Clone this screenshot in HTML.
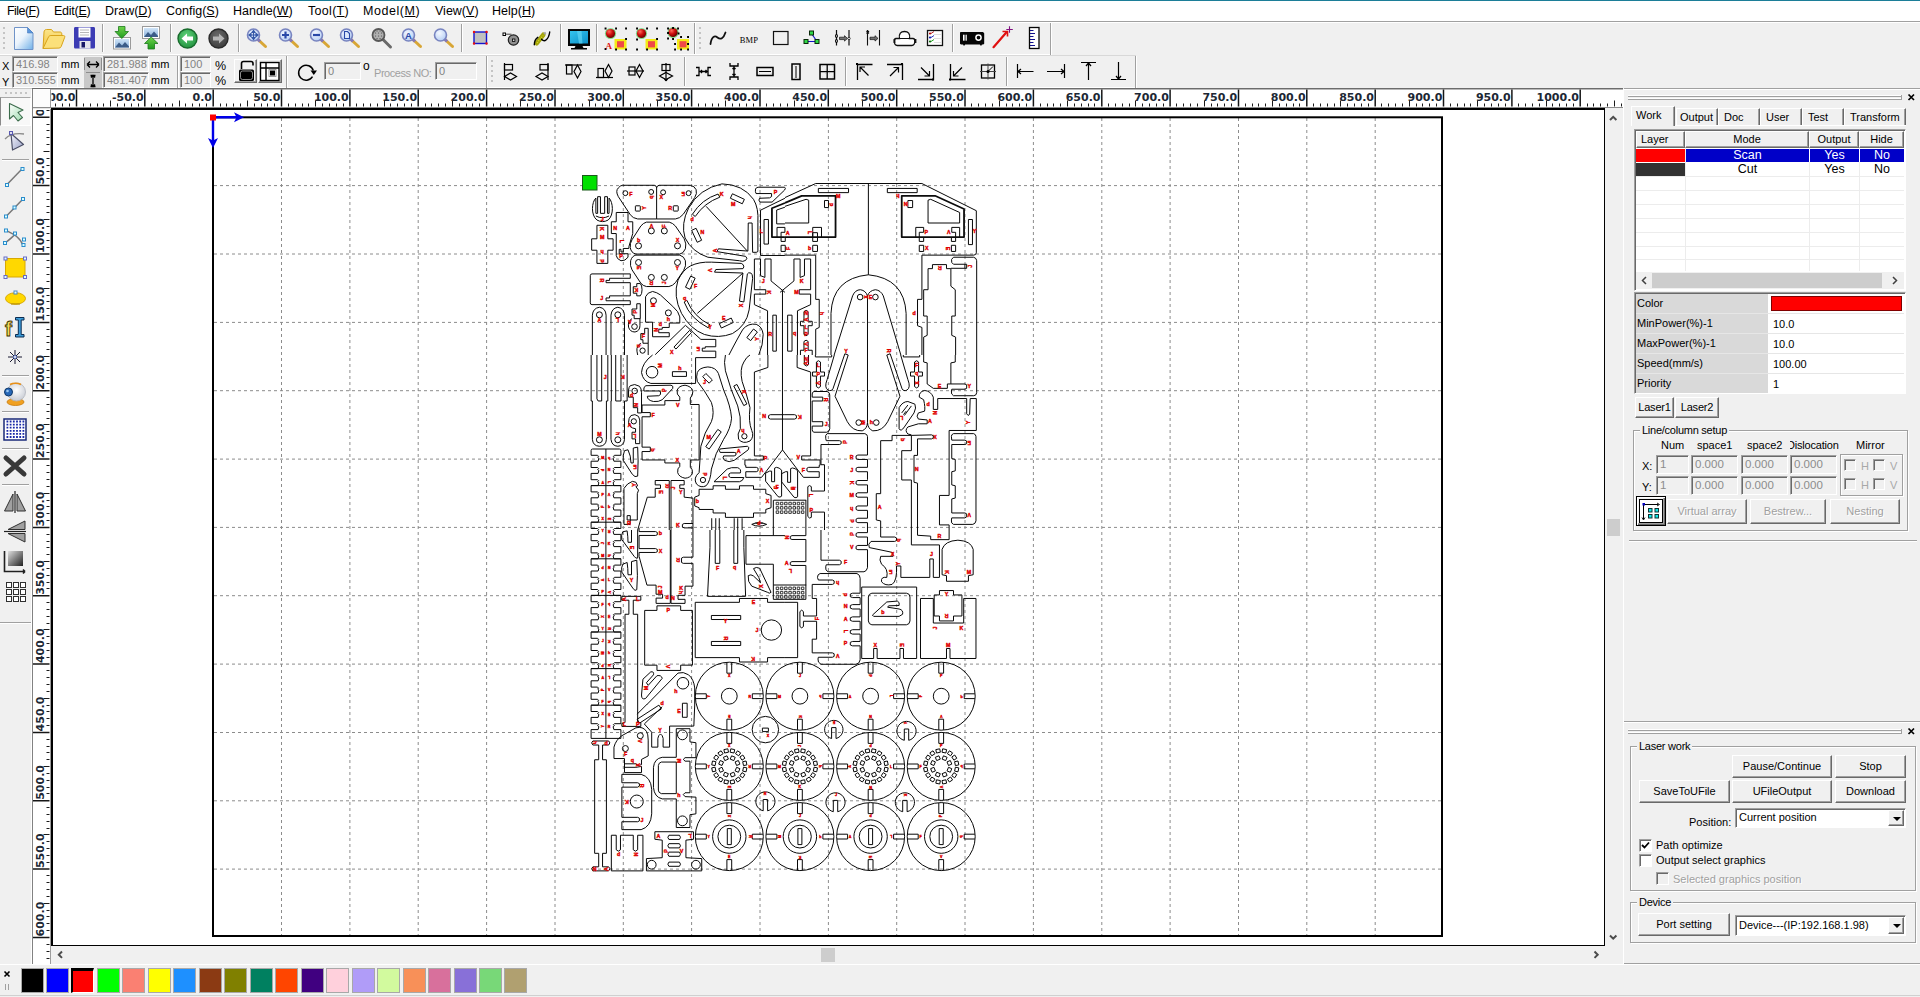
<!DOCTYPE html>
<html lang="en">
<head>
<meta charset="utf-8">
<title>RDWorks</title>
<style>
html,body{margin:0;padding:0;}
body{width:1920px;height:997px;position:relative;overflow:hidden;background:#f0f0f0;
 font-family:"Liberation Sans",sans-serif;font-size:11px;color:#000;}
.a{position:absolute;}
.t{position:absolute;white-space:nowrap;line-height:14px;font-size:11px;letter-spacing:0;}
svg{position:absolute;overflow:visible;}
#menubar{left:0;top:1px;width:1920px;height:20px;background:#fff;}
#menubar span{position:absolute;top:3px;font-size:12.5px;line-height:15px;white-space:nowrap;color:#000;}
#menubar u{text-decoration:underline;text-underline-offset:1px;}
.vsep{position:absolute;width:1px;background:#a0a0a0;border-right:1px solid #fff;}
.hsep{position:absolute;height:1px;background:#a0a0a0;border-bottom:1px solid #fff;}
.grip{position:absolute;width:2px;}
.fld{position:absolute;box-sizing:border-box;border:1px solid;border-color:#a0a0a0 #fff #fff #a0a0a0;
 background:#f0f0f0;color:#838383;font-size:11px;line-height:14px;padding-left:3px;white-space:nowrap;overflow:hidden;
 box-shadow:inset 1px 1px 0 #696969;}
.btn{position:absolute;box-sizing:border-box;border:1px solid;border-color:#fff #696969 #696969 #fff;
 background:#f0f0f0;box-shadow:inset -1px -1px 0 #a0a0a0;text-align:center;font-size:11px;line-height:20px;white-space:nowrap;}
.grp{position:absolute;box-sizing:border-box;border:1px solid #a0a0a0;box-shadow:1px 1px 0 #fff, inset 1px 1px 0 #fff;}
.grp>b{position:absolute;top:-8px;left:6px;background:#f0f0f0;padding:0 2px;font-weight:normal;font-size:11px;letter-spacing:-.25px;line-height:14px;white-space:nowrap;}
.cb{position:absolute;box-sizing:border-box;width:13px;height:13px;border:1px solid;border-color:#a0a0a0 #fff #fff #a0a0a0;
 background:#fff;box-shadow:inset 1px 1px 0 #696969;}
.combo{position:absolute;box-sizing:border-box;border:1px solid;border-color:#a0a0a0 #fff #fff #a0a0a0;background:#fff;
 box-shadow:inset 1px 1px 0 #696969;font-size:11px;line-height:16px;padding-left:3px;white-space:nowrap;}
.combo i{position:absolute;right:1px;top:1px;bottom:1px;width:16px;box-sizing:border-box;border:1px solid;border-color:#fff #696969 #696969 #fff;background:#f0f0f0;box-shadow:inset -1px -1px 0 #a0a0a0;}
.combo i:after{content:"";position:absolute;left:4px;top:6px;border:4px solid transparent;border-top:4px solid #000;border-bottom:none;}
</style>
</head>
<body>
<div class="a" style="left:0;top:0;width:1920px;height:1px;background:#1c7e98"></div>
<div id="menubar" class="a">
<span style="left:7px;letter-spacing:-.55px">File(<u>F</u>)</span>
<span style="left:54px;letter-spacing:-.25px">Edit(<u>E</u>)</span>
<span style="left:105px">Draw(<u>D</u>)</span>
<span style="left:166px">Config(<u>S</u>)</span>
<span style="left:233px">Handle(<u>W</u>)</span>
<span style="left:308px;letter-spacing:.3px">Tool(<u>T</u>)</span>
<span style="left:363px;letter-spacing:.55px">Model(<u>M</u>)</span>
<span style="left:435px">View(<u>V</u>)</span>
<span style="left:492px">Help(<u>H</u>)</span>
</div>
<div class="a" style="left:0;top:21px;width:1920px;height:1px;background:#a0a0a0"></div>
<div class="a" style="left:0;top:22px;width:1920px;height:1px;background:#fff"></div>
<div class="a" style="left:0;top:54px;width:1051px;height:1px;background:#fff"></div>
<div class="a" style="left:0;top:55px;width:1136px;height:1px;background:#d8d8d8"></div>
<div class="a" style="left:3px;top:27px;width:2px;height:2px;background:#c4c4c4"></div>
<div class="a" style="left:3px;top:32px;width:2px;height:2px;background:#c4c4c4"></div>
<div class="a" style="left:3px;top:37px;width:2px;height:2px;background:#c4c4c4"></div>
<div class="a" style="left:3px;top:42px;width:2px;height:2px;background:#c4c4c4"></div>
<div class="a" style="left:3px;top:47px;width:2px;height:2px;background:#c4c4c4"></div>
<svg style="left:0;top:22px" width="1060" height="34" viewBox="0 22 1060 34">
<defs>
<linearGradient id="gdoc" x1="0" y1="0" x2="1" y2="1"><stop offset="0" stop-color="#fff"/><stop offset=".45" stop-color="#eaf3fc"/><stop offset="1" stop-color="#6fb0e8"/></linearGradient>
<linearGradient id="gfold" x1="0" y1="0" x2="0" y2="1"><stop offset="0" stop-color="#fbe58a"/><stop offset="1" stop-color="#f3c544"/></linearGradient>
<radialGradient id="ggrn" cx=".45" cy=".35" r=".7"><stop offset="0" stop-color="#5fd27a"/><stop offset="1" stop-color="#1f8f3c"/></radialGradient>
<radialGradient id="ggry" cx=".45" cy=".35" r=".7"><stop offset="0" stop-color="#6a6a6a"/><stop offset="1" stop-color="#3a3a3a"/></radialGradient>
<radialGradient id="glens" cx=".4" cy=".35" r=".7"><stop offset="0" stop-color="#f4f8ff"/><stop offset="1" stop-color="#b4cdf4"/></radialGradient>
<radialGradient id="gball" cx=".35" cy=".3" r=".7"><stop offset="0" stop-color="#ff6a5a"/><stop offset=".5" stop-color="#d01010"/><stop offset="1" stop-color="#700000"/></radialGradient>
<linearGradient id="gpic" x1="0" y1="0" x2="0" y2="1"><stop offset="0" stop-color="#cfe4f8"/><stop offset="1" stop-color="#8fb4dc"/></linearGradient>
<linearGradient id="garr" x1="0" y1="0" x2="0" y2="1"><stop offset="0" stop-color="#6fd44a"/><stop offset="1" stop-color="#1f9a1f"/></linearGradient>
<linearGradient id="gscr" x1="0" y1="0" x2="1" y2="1"><stop offset="0" stop-color="#35c4ee"/><stop offset="1" stop-color="#0c90c8"/></linearGradient>
<g id="mag"><line x1="4.5" y1="4.5" x2="12" y2="11.5" stroke="#d8a636" stroke-width="3" stroke-linecap="round"/><line x1="4" y1="4" x2="6.5" y2="6.5" stroke="#8478b8" stroke-width="3"/><circle cx="0" cy="0" r="6" fill="url(#glens)" stroke="#7884c0" stroke-width="1.6"/></g>
</defs>
<path d="M14.5 27.5h13l5.5 5.5v16.5h-18.5z" fill="url(#gdoc)" stroke="#6f93c8" stroke-width="1"/><path d="M27.5 27.5v5.5h5.5z" fill="#5b96dc" stroke="#4a7cc0" stroke-width=".6"/>
<path d="M43 48.5l1-16.5c.2-1.5 1-2.5 2.5-2.5l5 0 2 2.500h6.500c1.200 0 1.800.8 1.800 2v3" fill="url(#gfold)" stroke="#d8a41c" stroke-width="1"/><path d="M43 48.500l5.500-11.500c.5-1 1.200-1.500 2.500-1.500h12.500c1.200 0 1.500.800 1.200 1.800l-3.500 9.200c-.4 1-1 1.500-2.200 1.600z" fill="#fbe07a" stroke="#d8a41c" stroke-width="1"/>
<path d="M74 28.500c0-1 .6-1.500 1.500-1.500h18c.900 0 1.500.5 1.500 1.500v18.500c0 1-.600 1.500-1.500 1.500h-18c-.9 0-1.500-.5-1.500-1.500z" fill="#3c3cb4"/><rect x="78.500" y="27.500" width="12" height="10" fill="#fff"/><path d="M80 30h9M80 32.500h9M80 35h9" stroke="#b8b8b8" stroke-width="1"/><rect x="79.500" y="41" width="11" height="7.500" fill="#e4e4ec"/><rect x="81.500" y="42" width="3.500" height="5.500" fill="#181868"/>
<rect x="113.500" y="37.500" width="17" height="11.500" fill="#fff" stroke="#9a9a9a"/><rect x="115" y="39" width="14" height="8.500" fill="url(#gpic)"/><path d="M115 47.500l4-5 3 3 3-3.500 4 4.500v1z" fill="#3c5c88"/><path d="M118.500 26.500h6.500v5h3.500l-6.700 7-6.800-7h3.500z" fill="url(#garr)" stroke="#1c7a1c" stroke-width=".8"/>
<rect x="142.500" y="26.500" width="17" height="12" fill="#fff" stroke="#9a9a9a"/><rect x="144" y="28" width="14" height="9" fill="url(#gpic)"/><path d="M144 37l4-5 3 3 3-3.500 4 4.500v1z" fill="#3c5c88"/><path d="M148 49v-5.500h-3.500l6.700-6.500 6.800 6.500h-3.500v5.500z" fill="url(#garr)" stroke="#1c7a1c" stroke-width=".8"/>
<circle cx="187.500" cy="38.500" r="9.500" fill="url(#ggrn)" stroke="#176a2c" stroke-width="1.400"/><path d="M181.500 38.500l5.500-5v3h6v4h-6v3z" fill="#fff"/>
<circle cx="218.500" cy="38.500" r="9.500" fill="url(#ggry)" stroke="#2a2a2a" stroke-width="1.400"/><path d="M224.500 38.500l-5.500-5v3h-6v4h6v3z" fill="#b4b4b4"/>
<use href="#mag" x="253.5" y="35"/>
<use href="#mag" x="285.5" y="35"/>
<use href="#mag" x="316.5" y="35"/>
<use href="#mag" x="346.5" y="35"/>
<use href="#mag" x="408.5" y="35"/>
<use href="#mag" x="440.5" y="35"/>
<g transform="translate(378.500 35)"><line x1="4.500" y1="4.500" x2="12" y2="12" stroke="#6a6a6a" stroke-width="3" stroke-linecap="round"/><circle r="6" fill="#b0b0b0" stroke="#585858" stroke-width="1.800"/><path d="M-3-2h.1M0-2h.1M3-2h.1M-3 1h.1M0 1h.1M3 1h.1M-1.500 3.500h.1M1.500 3.500h.1M-1.500-4h.1M1.500-4h.1" stroke="#505050" stroke-width="1.200" stroke-linecap="round"/></g>
<path d="M253.500 30.500v9M249 35h9M253.500 30.500l-1.500 2h3zM253.500 39.500l-1.500-2h3zM249 35l2-1.500v3zM258 35l-2-1.500v3z" stroke="#3458a8" stroke-width="1.200" fill="#3458a8"/>
<path d="M285.500 31.500v7M282 35h7" stroke="#2848a8" stroke-width="2.200"/>
<path d="M313 35h7" stroke="#2848a8" stroke-width="2.200"/>
<path d="M344.500 31.500h3l2 2v5h-5z" fill="#dce8fc" stroke="#2848a8" stroke-width="1.100"/>
<text x="408.500" y="38.500" font-size="9.500" font-weight="bold" fill="#2848a8" text-anchor="middle" font-family="Liberation Sans,sans-serif">A</text>
<rect x="474" y="32" width="12.500" height="11.500" fill="#c0c0c0" stroke="#1414d0" stroke-width="1.400"/><path d="M474 32h.1M486.500 32h.1M474 43.500h.1M486.500 43.500h.1" stroke="#e81010" stroke-width="2.400" stroke-linecap="round"/>
<rect x="503" y="33" width="2.500" height="2.500" fill="#fff" stroke="#000" stroke-width="1"/><path d="M505.500 34.200h6" stroke="#444" stroke-width="1"/><circle cx="513.500" cy="40" r="5.200" fill="#909090" stroke="#202020" stroke-width="1.200"/><rect x="512.500" y="39" width="2.400" height="2.400" fill="#d0d0d0" stroke="#000" stroke-width=".8"/>
<path d="M536.800 43.200L543.300 34.800" stroke="#a4a40c" stroke-width="4.600" stroke-linecap="round"/><path d="M537 43L543 35.500" stroke="#e4e428" stroke-width="1.100" stroke-dasharray="1 1.300"/><path d="M544 34l1.700-1.400" stroke="#a0a0a0" stroke-width="2"/><path d="M534.300 44.800c0-3 .5-5.500 3.500-7.500M541.500 39.200c1.500 1.500 3 2 4.500.8s3.200-4 3.700-8" stroke="#000" stroke-width="1.400" fill="none" stroke-linecap="round"/>
<rect x="568" y="29" width="22" height="17" fill="#050505"/><rect x="570" y="31" width="18" height="12.500" fill="url(#gscr)"/><path d="M577 31l2 12.500h3.500l-1-12.500z" fill="#5fd4f4" opacity=".7"/><path d="M575.500 46h7l1 2h3.500v1.500h-16v-1.500h3.500z" fill="#050505"/>
<circle cx="610.5" cy="33.5" r="5.600" fill="#58d468" opacity=".75"/><circle cx="610.5" cy="33.5" r="4.600" fill="url(#gball)"/>
<rect x="614.5" y="39" width="12" height="10.500" fill="#f4ec18"/><rect x="617.0" y="41.2" width="7" height="6.200" fill="#f04848"/>
<path d="M605.5 28.5h.1M616 28.5h.1M626 28.5h.1M626 39h.1M605.5 49h.1M616 49.5h.1M626 49.5h.1" stroke="#000" stroke-width="1.800" stroke-linecap="square"/>
<text x="605.5" y="48.5" font-size="9" font-weight="bold" fill="#e01010" font-family="Liberation Serif,serif">A</text>
<circle cx="641.5" cy="33.5" r="5.600" fill="#58d468" opacity=".75"/><circle cx="641.5" cy="33.5" r="4.600" fill="url(#gball)"/>
<rect x="645.5" y="39" width="12" height="10.500" fill="#f4ec18"/><rect x="648.0" y="41.2" width="7" height="6.200" fill="#f04848"/>
<path d="M637 28.5h.1M647 28.5h.1M657 28.5h.1M657 39h.1M637 39.5h.1M637 49.5h.1M647 49.5h.1M657 49.5h.1" stroke="#000" stroke-width="1.800" stroke-linecap="square"/>
<circle cx="673" cy="32.5" r="5.600" fill="#58d468" opacity=".75"/><circle cx="673" cy="32.5" r="4.600" fill="url(#gball)"/>
<rect x="677" y="39" width="12" height="10.500" fill="#f4ec18"/><rect x="679.5" y="41.2" width="7" height="6.200" fill="#f04848"/>
<path d="M668 28.5h.1M673 28h.1M678 28.5h.1M668 33h.1M678.5 33.5h.1M668 38.5h.1M673 39h.1M681 37h.1M688 37h.1M675 44h.1M688 44h.1M675 49.5h.1M681 49.5h.1M688 49.5h.1" stroke="#000" stroke-width="1.800" stroke-linecap="square"/>
<path d="M710.500 44c1-7 4-9 7-6.500s6 1 8-5" stroke="#101010" stroke-width="1.800" fill="none" stroke-linecap="round"/>
<text x="749" y="42.500" font-size="8.500" fill="#000" text-anchor="middle" font-family="Liberation Serif,serif" letter-spacing=".2">BMP</text>
<rect x="773.500" y="31.500" width="14.500" height="13" fill="none" stroke="#101010" stroke-width="1.200"/>
<path d="M811.500 33.500l5.500 8h-11" stroke="#1414c8" stroke-width="1.100" fill="none"/>
<rect x="809.5" y="31" width="4" height="4" fill="#30d848" stroke="#082808" stroke-width="1"/>
<rect x="804" y="39.5" width="4" height="4" fill="#30d848" stroke="#082808" stroke-width="1"/>
<rect x="815" y="39.5" width="4" height="4" fill="#30d848" stroke="#082808" stroke-width="1"/>
<path d="M836.500 30v15.500M849 30v15.500" stroke="#101010" stroke-width="1.200"/><rect x="835.500" y="35" width="2" height="2" fill="#fff" stroke="#000" stroke-width=".8"/><rect x="835.500" y="40" width="2" height="2" fill="#fff" stroke="#000" stroke-width=".8"/><path d="M839.500 37.200h5v-1.500l3 2.700-3 2.700v-1.500h-5z" fill="#707070" stroke="#101010" stroke-width=".7"/><circle cx="849" cy="38.500" r="1.200" fill="#fff" stroke="#000" stroke-width=".7"/>
<path d="M867.500 30v15.500M879.500 30v15.500M866.500 31l2.500 2.500M869 31l-2.500 2.500" stroke="#101010" stroke-width="1.100"/><path d="M870 37.200h5v-1.500l3 2.700-3 2.700v-1.500h-5z" fill="#707070" stroke="#101010" stroke-width=".7"/>
<path d="M896 38.500h3.500c-1-5 1.500-7 5-7s6 2 5 7h3.500c1.500 0 1.800 1 1.800 2.500s-.6 4.500-3 4.500h-14.500c-2.400 0-3-3-3-4.500s.3-2.500 1.700-2.500z" fill="#fff" stroke="#101010" stroke-width="1.300"/><path d="M899.500 38.500h10" stroke="#101010" stroke-width="1"/><path d="M894.500 39v4M915.500 39v4" stroke="#101010" stroke-width="1.800"/>
<rect x="927.500" y="30.500" width="15" height="15" fill="#fff" stroke="#101010" stroke-width="1.300"/><path d="M930 33.500h.1" stroke="#b01010" stroke-width="2.200" stroke-linecap="round"/><path d="M930 37.500h.1" stroke="#1020b0" stroke-width="2.200" stroke-linecap="round"/><path d="M930 41.500h.1" stroke="#107010" stroke-width="2.200" stroke-linecap="round"/><path d="M931 33.500l3-2" stroke="#b01010" stroke-width=".9"/><path d="M931 37.500l3-2" stroke="#1020b0" stroke-width=".9"/><path d="M931 41.500l3-2" stroke="#10a010" stroke-width=".9"/><path d="M934 34.500h7M934 38.500h7M934 42.500h7" stroke="#d0d0d0" stroke-width=".7"/>
<path d="M960 33c0-.7.500-1 1-1h22l1.200 1.200v10.500l-1 .8h-1.200l-1 1.500-1.200-1.500h-14.600l-1.200 1.500-1-1.500h-2l-1-.8z" fill="#050505"/><rect x="963" y="34.700" width="1.600" height="6" fill="#fff"/><rect x="965.400" y="34.700" width="1.600" height="6" fill="#c8c8c8"/><circle cx="978.500" cy="37.600" r="2.600" fill="#050505" stroke="#fff" stroke-width="1.500"/>
<path d="M993.500 47.200l13-15" stroke="#e01010" stroke-width="2.200" stroke-linecap="round"/><path d="M1002.500 31.500h5v5" stroke="#e01010" stroke-width="1.600" fill="none"/><path d="M1009.500 26.300v6.500M1006.300 29.500h6.500" stroke="#801080" stroke-width="1.100"/>
<rect x="1029.500" y="27.500" width="9.500" height="21" fill="#fff" stroke="#050505" stroke-width="1.300"/><path d="M1030 30.500h3.500M1030 33.500h5M1030 36.500h3.500M1030 39.500h5M1030 42.500h3.500M1030 45.500h5" stroke="#10108c" stroke-width="1"/>
</svg>
<div class="vsep" style="left:102px;top:24px;height:28px"></div>
<div class="vsep" style="left:170px;top:24px;height:28px"></div>
<div class="vsep" style="left:238px;top:24px;height:28px"></div>
<div class="vsep" style="left:461px;top:24px;height:28px"></div>
<div class="vsep" style="left:560px;top:24px;height:28px"></div>
<div class="vsep" style="left:596px;top:24px;height:28px"></div>
<div class="vsep" style="left:694px;top:23px;height:31px"></div>
<div class="a" style="left:699px;top:27px;width:2px;height:2px;background:#c4c4c4"></div>
<div class="a" style="left:699px;top:32px;width:2px;height:2px;background:#c4c4c4"></div>
<div class="a" style="left:699px;top:37px;width:2px;height:2px;background:#c4c4c4"></div>
<div class="a" style="left:699px;top:42px;width:2px;height:2px;background:#c4c4c4"></div>
<div class="a" style="left:699px;top:47px;width:2px;height:2px;background:#c4c4c4"></div>
<div class="vsep" style="left:952px;top:24px;height:28px"></div>
<div class="vsep" style="left:1050px;top:23px;height:32px"></div>
<div class="a" style="left:0;top:87px;width:1136px;height:1px;background:#fff"></div>
<div class="a" style="left:0;top:88px;width:32px;height:1px;background:#c8c8c8"></div>
<div class="t" style="left:2px;top:59px;font-size:11px">X</div><div class="t" style="left:2px;top:75px;font-size:11px">Y</div>
<div class="fld" style="left:12px;top:56px;width:46px;height:16px">416.98</div>
<div class="fld" style="left:12px;top:72px;width:46px;height:16px">310.555</div>
<div class="t" style="left:61px;top:57px;font-size:11px">mm</div><div class="t" style="left:61px;top:73px;font-size:11px">mm</div>
<div class="a" style="left:84px;top:57px;width:18px;height:31px;background:#c8c8c8"></div>
<svg style="left:84px;top:57px" width="18" height="31" viewBox="84 57 18 31"><path d="M84.500 58v12M101.500 58v12M86 72.500h14" stroke="#8c8c8c" stroke-width="1"/><path d="M87 64.500h12M87 64.500l3-3M87 64.500l3 3M99 64.500l-3-3M99 64.500l-3 3" stroke="#000" stroke-width="1.300" fill="none"/><path d="M93 75v12M90.500 75.500h5M90.500 86.500h5M93 75l-2 2.500M93 75l2 2.500M93 87l-2-2.500M93 87l2-2.500" stroke="#000" stroke-width="1.300" fill="none"/></svg>
<div class="fld" style="left:103px;top:56px;width:46px;height:16px">281.988</div>
<div class="fld" style="left:103px;top:72px;width:46px;height:16px">481.407</div>
<div class="t" style="left:151px;top:57px;font-size:11px">mm</div><div class="t" style="left:151px;top:73px;font-size:11px">mm</div>
<div class="vsep" style="left:177px;top:56px;height:32px"></div>
<div class="fld" style="left:180px;top:56px;width:31px;height:16px">100</div>
<div class="fld" style="left:180px;top:72px;width:31px;height:16px">100</div>
<div class="t" style="left:215px;top:59px;font-size:12.500px">%</div><div class="t" style="left:215px;top:74px;font-size:12.500px">%</div>
<div class="btn" style="left:234px;top:59px;width:23px;height:24px"></div><div class="btn" style="left:258px;top:59px;width:24px;height:24px"></div>
<svg style="left:234px;top:59px" width="50" height="26" viewBox="234 59 50 26">
<path d="M241.500 69v-5.500c0-1.200.6-2 2-2h7.500c1.400 0 2 .8 2 2v2" stroke="#000" stroke-width="1.600" fill="none"/><rect x="239" y="69.500" width="15" height="11.500" rx="1.500" fill="#000"/><rect x="240.500" y="71" width="12" height="8.500" rx="2" fill="none" stroke="#b0b0b0" stroke-width=".8"/>
<rect x="260.500" y="62.500" width="18.500" height="18" fill="#fff" stroke="#000" stroke-width="1.400"/><path d="M266 62.500v18M260.500 68h18.500" stroke="#000" stroke-width="1.400"/><rect x="270" y="70.500" width="5" height="5" fill="#000"/><rect x="269" y="69.500" width="7" height="7" fill="none" stroke="#888" stroke-width=".8"/>
</svg>
<div class="vsep" style="left:286px;top:56px;height:32px"></div>
<svg style="left:296px;top:60px" width="24" height="24" viewBox="296 60 24 24"><path d="M313.300 70.500a7.500 7.500 0 1 0 -.8 6.200" stroke="#000" stroke-width="1.500" fill="none"/><path d="M310.500 70.500h6.500l-3.200 4.500z" fill="#000"/></svg>
<div class="fld" style="left:324px;top:62px;width:37px;height:18px;line-height:16px;padding-left:3px">0</div>
<div class="t" style="left:363px;top:59px;font-size:12px">o</div>
<div class="t" style="left:374px;top:66px;font-size:11px;color:#a0a0a0;letter-spacing:-.45px">Process NO:</div>
<div class="fld" style="left:435px;top:62px;width:42px;height:18px;line-height:16px;padding-left:3px">0</div>
<div class="vsep" style="left:486px;top:56px;height:32px"></div>
<div class="a" style="left:491px;top:60px;width:2px;height:2px;background:#c4c4c4"></div>
<div class="a" style="left:491px;top:65px;width:2px;height:2px;background:#c4c4c4"></div>
<div class="a" style="left:491px;top:70px;width:2px;height:2px;background:#c4c4c4"></div>
<div class="a" style="left:491px;top:75px;width:2px;height:2px;background:#c4c4c4"></div>
<div class="a" style="left:491px;top:80px;width:2px;height:2px;background:#c4c4c4"></div>
<svg style="left:495px;top:56px" width="645" height="32" viewBox="495 56 645 32" fill="none" stroke="#000" stroke-width="1.200">
<path d="M504.500 63v17"/><rect x="504.500" y="64.500" width="8" height="5.500"/><path d="M504.500 76.500l6-3.500 6 3.500-6 3.500z"/>
<path d="M548 63v17"/><rect x="540" y="64.500" width="8" height="5.500"/><path d="M548 76.500l-6-3.500-6 3.500 6 3.500z"/>
<path d="M565 65h17"/><rect x="566.500" y="65" width="5.500" height="9"/><path d="M577.500 65l3.500 6.500-3.500 6.500-3.500-6.500z"/>
<path d="M596 77.500h17"/><rect x="598" y="68.500" width="5.500" height="9"/><path d="M608.500 64.500l3.500 6.500-3.500 6.500-3.500-6.500z"/>
<path d="M627 71h17"/><rect x="629" y="67" width="6" height="8"/><path d="M639.500 64.500l3.500 6.500-3.500 6.500-3.500-6.500z"/>
<path d="M666 63v18"/><rect x="662" y="64.500" width="8" height="6"/><path d="M666 72.500l6.500 3.500-6.500 3.500-6.500-3.500z"/><path d="M666 81l-1.500-2M666 81l1.500-2"/>
<path d="M696 67.500h3v8h-3M711 67.500h-3v8h3M699 71.500h9M702 70l-1.500 1.500 1.500 1.500M705.500 70l1.500 1.500-1.500 1.500" stroke-width="1.300"/>
<path d="M730 63v3h8v-3M730 80v-3h8v3M734 66v11M732.500 69l1.500-1.500 1.500 1.500M732.500 74l1.500 1.500 1.500-1.500" stroke-width="1.300"/>
<rect x="757" y="67.500" width="16" height="8" stroke-width="1.500"/><path d="M759 71.500h12" stroke-width="1"/><path d="M759 69.500h.1M759 73.500h.1M771 69.500h.1M771 73.500h.1" stroke-width="1.200"/>
<rect x="792" y="64" width="8" height="15.500" stroke-width="1.500"/><path d="M796 66v12" stroke-width="1"/><path d="M794 66h.1M798 66h.1M794 78h.1M798 78h.1" stroke-width="1.200"/>
<rect x="820" y="64.500" width="14.500" height="14.500" stroke-width="1.500"/><path d="M827.200 64.500v14.500M820 71.700h14.500" stroke-width="1.300"/><path d="M822 66.500h.1M832.500 66.500h.1M822 77h.1M832.500 77h.1M825.500 70h.1M829 70h.1M825.500 73.500h.1M829 73.500h.1" stroke-width="1.200"/>
<path d="M857.500 80v-15.500h15" stroke-width="1.300"/><path d="M868.500 75.500l-8.500-8.500M860 72v-5h5" stroke-width="1.200"/><rect x="856" y="63" width="2" height="2" fill="#000" stroke="none"/>
<path d="M887 64.500h15.500v15.500" stroke-width="1.300"/><path d="M890 76l8.500-8.500M893.500 67.500h5v5" stroke-width="1.200"/><rect x="901" y="63" width="2" height="2" fill="#000" stroke="none"/>
<path d="M933.500 64v15.500h-15.500" stroke-width="1.300"/><path d="M921 67.500l8.500 8.500M929.500 71v5h-5" stroke-width="1.200"/><rect x="932" y="78.500" width="2" height="2" fill="#000" stroke="none"/>
<path d="M950.500 64v15.500h15" stroke-width="1.300"/><path d="M962 67.500l-8.500 8.500M953.500 71v5h5" stroke-width="1.200"/><rect x="949" y="78.500" width="2" height="2" fill="#000" stroke="none"/>
<rect x="981.500" y="65" width="13" height="13" stroke-width="1.300"/><path d="M980 71.500h16M988 63.500v16" stroke-width="1" stroke="#444"/><path d="M988 71.500l5-5" stroke-width="1"/><circle cx="988" cy="71.500" r="1.500" fill="#000" stroke="none"/>
<path d="M1017.500 64v14M1017.500 71.500h16M1018 71.500l3-2.500M1018 71.500l3 2.500" stroke-width="1.200"/>
<path d="M1064.500 64v14M1047 71.500h17M1064 71.500l-3-2.500M1064 71.500l-3 2.500" stroke-width="1.200"/>
<path d="M1081 62.500h15M1088.500 63v17M1088.500 63l-2.500 3M1088.500 63l2.500 3" stroke-width="1.200"/>
<path d="M1111 79.500h15M1118.500 62v17M1118.500 79l-2.500-3M1118.500 79l2.500-3" stroke-width="1.200"/>
</svg>
<div class="vsep" style="left:684px;top:57px;height:29px"></div>
<div class="vsep" style="left:845px;top:57px;height:29px"></div>
<div class="vsep" style="left:1006px;top:57px;height:29px"></div>
<div class="vsep" style="left:1135px;top:56px;height:32px"></div>
<div class="a" style="left:5px;top:92px;width:2px;height:2px;background:#c4c4c4"></div>
<div class="a" style="left:10px;top:92px;width:2px;height:2px;background:#c4c4c4"></div>
<div class="a" style="left:15px;top:92px;width:2px;height:2px;background:#c4c4c4"></div>
<div class="a" style="left:20px;top:92px;width:2px;height:2px;background:#c4c4c4"></div>
<div class="a" style="left:25px;top:92px;width:2px;height:2px;background:#c4c4c4"></div>
<div class="a" style="left:0;top:97px;width:31px;height:29px;box-sizing:border-box;background:#f8f8f8;border-left:1px solid #8a8a8a;border-top:1px solid #a8a8a8;border-right:1px solid #fff;border-bottom:1px solid #fff"></div>
<div class="hsep" style="left:2px;top:159px;width:27px"></div>
<div class="hsep" style="left:2px;top:375px;width:27px"></div>
<div class="hsep" style="left:2px;top:411px;width:27px"></div>
<div class="hsep" style="left:2px;top:448px;width:27px"></div>
<div class="hsep" style="left:2px;top:484px;width:27px"></div>
<svg style="left:0;top:96px" width="32" height="520" viewBox="0 96 32 520">
<defs><linearGradient id="garw" x1="0" y1="0" x2="1" y2="1"><stop offset="0" stop-color="#fff"/><stop offset="1" stop-color="#9fdcb0"/></linearGradient>
<linearGradient id="gtri" x1="0" y1="0" x2="1" y2="1"><stop offset="0" stop-color="#f4f4fc"/><stop offset="1" stop-color="#9ca4c8"/></linearGradient>
<radialGradient id="gcam" cx=".5" cy=".4" r=".6"><stop offset="0" stop-color="#fff"/><stop offset="1" stop-color="#c8ccd4"/></radialGradient>
<linearGradient id="gsq" x1="0" y1="0" x2="1" y2="1"><stop offset="0" stop-color="#e0e0e0"/><stop offset="1" stop-color="#202020"/></linearGradient></defs>
<path d="M9.500 103.500l13.500 6.500-5 2.500 4.500 5-4.500 3.500-4.500-5.500-4 3.500z" fill="url(#garw)" stroke="#3c6c4c" stroke-width="1.100" stroke-linejoin="round"/>
<path d="M5 139c4-4 11-6 19-5" stroke="#8a8a8a" stroke-width="1.300" fill="none"/><path d="M11 133.500l12.500 11-11 5.500z" fill="url(#gtri)" stroke="#4c5068" stroke-width="1.200" stroke-linejoin="round"/><rect x="9.500" y="131.500" width="3" height="3" fill="#dde" stroke="#5858b0" stroke-width="1"/>
<path d="M7 184.500l15-15.500" stroke="#787878" stroke-width="1.500"/>
<rect x="5.5" y="183.5" width="3" height="3" fill="#dff" stroke="#2a8ccc" stroke-width="1"/>
<rect x="21.0" y="167.5" width="3" height="3" fill="#dff" stroke="#2a8ccc" stroke-width="1"/>
<path d="M6.500 216l16.500-17" stroke="#787878" stroke-width="1.500"/>
<rect x="4.5" y="215.0" width="3" height="3" fill="#dff" stroke="#2a8ccc" stroke-width="1"/>
<rect x="13.0" y="206.0" width="3" height="3" fill="#dff" stroke="#2a8ccc" stroke-width="1"/>
<rect x="21.5" y="197.5" width="3" height="3" fill="#dff" stroke="#2a8ccc" stroke-width="1"/>
<path d="M6 230.500c6 3 14 6 17 15M5 243c4-3 8-6 10-9" stroke="#787878" stroke-width="1.500" fill="none"/>
<rect x="4.5" y="229.0" width="3" height="3" fill="#dff" stroke="#2a8ccc" stroke-width="1"/>
<rect x="3.5" y="241.5" width="3" height="3" fill="#dff" stroke="#2a8ccc" stroke-width="1"/>
<rect x="13.5" y="232.0" width="3" height="3" fill="#dff" stroke="#2a8ccc" stroke-width="1"/>
<rect x="22.0" y="243.5" width="3" height="3" fill="#dff" stroke="#2a8ccc" stroke-width="1"/>
<rect x="22.5" y="238.0" width="3" height="3" fill="#dff" stroke="#2a8ccc" stroke-width="1"/>
<rect x="5.500" y="258.500" width="19.500" height="18.500" fill="#ffd800" stroke="#d8a800" stroke-width="1"/>
<rect x="4.0" y="257.0" width="3" height="3" fill="#dff" stroke="#6868c8" stroke-width="1"/>
<rect x="23.5" y="257.0" width="3" height="3" fill="#dff" stroke="#6868c8" stroke-width="1"/>
<rect x="4.0" y="275.5" width="3" height="3" fill="#dff" stroke="#6868c8" stroke-width="1"/>
<rect x="23.5" y="275.5" width="3" height="3" fill="#dff" stroke="#6868c8" stroke-width="1"/>
<ellipse cx="15.500" cy="298.500" rx="10" ry="5.700" fill="#ffd800" stroke="#d8a800" stroke-width="1"/><path d="M11 304h9" stroke="#b08800" stroke-width="1"/>
<rect x="14.0" y="291.0" width="3" height="3" fill="#dff" stroke="#4888c8" stroke-width="1"/>
<text x="5" y="335.500" font-size="21" font-weight="bold" fill="#f2da58" stroke="#3c3000" stroke-width=".9" font-family="Liberation Sans,sans-serif">f</text><path d="M15.500 317.500h8.500v2.500h-2.800v14.500h2.800v2.500h-8.500v-2.500h2.800v-14.500h-2.800z" fill="#3c9cd8" stroke="#0c2c50" stroke-width="1"/>
<path d="M15 350v14M8 357h14M10 352l10 10M20 352l-10 10" stroke="#181830" stroke-width="1"/><circle cx="15" cy="357" r="1.500" fill="#fff" stroke="#3858b8" stroke-width=".8"/>
<ellipse cx="15.500" cy="402" rx="8.500" ry="3.500" fill="#f0a020" stroke="#c87808" stroke-width=".8"/><circle cx="16.500" cy="392" r="9" fill="url(#gcam)" stroke="#b0b4bc" stroke-width=".8"/><circle cx="8.500" cy="392" r="4" fill="#2868b8" stroke="#103868" stroke-width="1"/><circle cx="7.500" cy="391" r="1.300" fill="#9cc8f0"/><path d="M10 384.500c3-1.500 8-1.500 11 0" stroke="#e89018" stroke-width="1.600" fill="none"/>
<rect x="4" y="419" width="22" height="21" fill="#fff" stroke="#182878" stroke-width="1.500"/>
<path d="M6.5 421.5h1.800M6.5 424.6h1.800M6.5 427.7h1.800M6.5 430.8h1.800M6.5 433.9h1.800M6.5 437.0h1.800M9.7 421.5h1.800M9.7 424.6h1.800M9.7 427.7h1.800M9.7 430.8h1.800M9.7 433.9h1.800M9.7 437.0h1.800M12.9 421.5h1.800M12.9 424.6h1.800M12.9 427.7h1.800M12.9 430.8h1.800M12.9 433.9h1.800M12.9 437.0h1.800M16.1 421.5h1.800M16.1 424.6h1.800M16.1 427.7h1.800M16.1 430.8h1.800M16.1 433.9h1.800M16.1 437.0h1.800M19.3 421.5h1.800M19.3 424.6h1.800M19.3 427.7h1.800M19.3 430.8h1.800M19.3 433.9h1.800M19.3 437.0h1.800M22.5 421.5h1.800M22.5 424.6h1.800M22.5 427.7h1.800M22.5 430.8h1.800M22.5 433.9h1.800M22.5 437.0h1.800" stroke="#1828a8" stroke-width="1.800"/>
<path d="M6 458l18 16M24 458l-18 16" stroke="#383838" stroke-width="5" stroke-linecap="round"/>
<path d="M15 491v22" stroke="#202020" stroke-width="1.200"/><path d="M13 494v17h-8.500z" fill="#a0a0a0" stroke="#303030" stroke-width="1"/><path d="M17 494v17h8.500z" fill="#a0a0a0" stroke="#303030" stroke-width="1"/>
<path d="M4 531.500h22" stroke="#202020" stroke-width="1.200"/><path d="M25 529.500h-17l17-8.500z" fill="#a0a0a0" stroke="#303030" stroke-width="1"/><path d="M25 533.500h-17l17 8.500z" fill="#a0a0a0" stroke="#303030" stroke-width="1"/>
<rect x="8" y="551" width="15" height="15" fill="url(#gsq)"/><path d="M4.500 551v20.500h20.500M25 571.500l-2-2M25 571.500l-2 2" stroke="#202020" stroke-width="1.600" fill="none"/>
<rect x="6.5" y="582.5" width="5" height="5" fill="#fff" stroke="#303030" stroke-width="1"/>
<rect x="6.5" y="589.5" width="5" height="5" fill="#fff" stroke="#303030" stroke-width="1"/>
<rect x="6.5" y="596.5" width="5" height="5" fill="#fff" stroke="#303030" stroke-width="1"/>
<rect x="13.5" y="582.5" width="5" height="5" fill="#fff" stroke="#303030" stroke-width="1"/>
<rect x="13.5" y="589.5" width="5" height="5" fill="#fff" stroke="#303030" stroke-width="1"/>
<rect x="13.5" y="596.5" width="5" height="5" fill="#fff" stroke="#303030" stroke-width="1"/>
<rect x="20.5" y="582.5" width="5" height="5" fill="#fff" stroke="#303030" stroke-width="1"/>
<rect x="20.5" y="589.5" width="5" height="5" fill="#fff" stroke="#303030" stroke-width="1"/>
<rect x="20.5" y="596.5" width="5" height="5" fill="#fff" stroke="#303030" stroke-width="1"/>
</svg>
<div class="a" style="left:0;top:622px;width:31px;height:1px;background:#a0a0a0"></div><div class="a" style="left:0;top:623px;width:31px;height:1px;background:#fff"></div>
<div class="a" style="left:31px;top:89px;width:1px;height:875px;background:#fff"></div>
<div class="a" style="left:32px;top:88px;width:1591px;height:1px;background:#6c6c6c"></div>
<div class="a" style="left:32px;top:89px;width:1px;height:875px;background:#828282"></div>
<div class="a" style="left:33px;top:89px;width:17px;height:18px;background:#fcfcfc"></div>
<div class="a" style="left:51px;top:89px;width:1572px;height:18px;background:#fff;border-top:1px solid #b8b8b8;box-sizing:border-box"></div>
<div class="a" style="left:33px;top:109px;width:17px;height:855px;background:#fff"></div>
<div class="a" style="left:50px;top:89px;width:1px;height:875px;background:#9c9c9c"></div>
<div class="a" style="left:33px;top:107px;width:1590px;height:1px;background:#8c8c8c"></div><div class="a" style="left:33px;top:108px;width:18px;height:1px;background:#e4e4e4"></div>
<div class="a" style="left:51px;top:108px;width:1554px;height:838px;background:#fff;box-sizing:border-box;border-left:2px solid #000;border-top:2px solid #000;border-right:1px solid #000;border-bottom:1px solid #000"></div>
<svg style="left:51px;top:89px" width="1572" height="19" viewBox="51 89 1572 19"><clipPath id="chr"><rect x="51.500" y="89" width="1571" height="19"/></clipPath><g clip-path="url(#chr)">
<path d="M55.5 103.500v3M62.5 103.500v3M69.5 103.500v3M83.5 103.500v3M90.5 103.500v3M97.5 103.500v3M103.5 103.500v3M117.5 103.500v3M124.5 103.500v3M131.5 103.500v3M138.5 103.500v3M151.5 103.500v3M158.5 103.500v3M165.5 103.500v3M172.5 103.500v3M185.5 103.500v3M192.5 103.500v3M199.5 103.500v3M206.5 103.500v3M220.5 103.500v3M226.5 103.500v3M233.5 103.500v3M240.5 103.500v3M254.5 103.500v3M261.5 103.500v3M267.5 103.500v3M274.5 103.500v3M288.5 103.500v3M295.5 103.500v3M302.5 103.500v3M308.5 103.500v3M322.5 103.500v3M329.5 103.500v3M336.5 103.500v3M343.5 103.500v3M356.5 103.500v3M363.5 103.500v3M370.5 103.500v3M377.5 103.500v3M390.5 103.500v3M397.5 103.500v3M404.5 103.500v3M411.5 103.500v3M425.5 103.500v3M431.5 103.500v3M438.5 103.500v3M445.5 103.500v3M459.5 103.500v3M466.5 103.500v3M472.5 103.500v3M479.5 103.500v3M493.5 103.500v3M500.5 103.500v3M507.5 103.500v3M513.5 103.500v3M527.5 103.500v3M534.5 103.500v3M541.5 103.500v3M548.5 103.500v3M561.5 103.500v3M568.5 103.500v3M575.5 103.500v3M582.5 103.500v3M595.5 103.500v3M602.5 103.500v3M609.5 103.500v3M616.5 103.500v3M630.5 103.500v3M636.5 103.500v3M643.5 103.500v3M650.5 103.500v3M664.5 103.500v3M671.5 103.500v3M677.5 103.500v3M684.5 103.500v3M698.5 103.500v3M705.5 103.500v3M712.5 103.500v3M718.5 103.500v3M732.5 103.500v3M739.5 103.500v3M746.5 103.500v3M753.5 103.500v3M766.5 103.500v3M773.5 103.500v3M780.5 103.500v3M787.5 103.500v3M801.5 103.500v3M807.5 103.500v3M814.5 103.500v3M821.5 103.500v3M835.5 103.500v3M842.5 103.500v3M848.5 103.500v3M855.5 103.500v3M869.5 103.500v3M876.5 103.500v3M883.5 103.500v3M889.5 103.500v3M903.5 103.500v3M910.5 103.500v3M917.5 103.500v3M924.5 103.500v3M937.5 103.500v3M944.5 103.500v3M951.5 103.500v3M958.5 103.500v3M971.5 103.500v3M978.5 103.500v3M985.5 103.500v3M992.5 103.500v3M1006.5 103.500v3M1012.5 103.500v3M1019.5 103.500v3M1026.5 103.500v3M1040.5 103.500v3M1047.5 103.500v3M1053.5 103.500v3M1060.5 103.500v3M1074.5 103.500v3M1081.5 103.500v3M1088.5 103.500v3M1094.5 103.500v3M1108.5 103.500v3M1115.5 103.500v3M1122.5 103.500v3M1129.5 103.500v3M1142.5 103.500v3M1149.5 103.500v3M1156.5 103.500v3M1163.5 103.500v3M1176.5 103.500v3M1183.5 103.500v3M1190.5 103.500v3M1197.5 103.500v3M1211.5 103.500v3M1217.5 103.500v3M1224.5 103.500v3M1231.5 103.500v3M1245.5 103.500v3M1252.5 103.500v3M1258.5 103.500v3M1265.5 103.500v3M1279.5 103.500v3M1286.5 103.500v3M1293.5 103.500v3M1299.5 103.500v3M1313.5 103.500v3M1320.5 103.500v3M1327.5 103.500v3M1334.5 103.500v3M1347.5 103.500v3M1354.5 103.500v3M1361.5 103.500v3M1368.5 103.500v3M1381.5 103.500v3M1388.5 103.500v3M1395.5 103.500v3M1402.5 103.500v3M1416.5 103.500v3M1422.5 103.500v3M1429.5 103.500v3M1436.5 103.500v3M1450.5 103.500v3M1457.5 103.500v3M1464.5 103.500v3M1470.5 103.500v3M1484.5 103.500v3M1491.5 103.500v3M1498.5 103.500v3M1505.5 103.500v3M1518.5 103.500v3M1525.5 103.500v3M1532.5 103.500v3M1539.5 103.500v3M1552.5 103.500v3M1559.5 103.500v3M1566.5 103.500v3M1573.5 103.500v3M1587.5 103.500v3M1593.5 103.500v3M1600.5 103.500v3M1607.5 103.500v3M1621.5 103.500v3" stroke="#1a1a1a" stroke-width="1"/><path d="M110.5 100.500v6M179.5 100.500v6M247.5 100.500v6M315.5 100.500v6M384.5 100.500v6M452.5 100.500v6M520.5 100.500v6M589.5 100.500v6M657.5 100.500v6M725.5 100.500v6M794.5 100.500v6M862.5 100.500v6M930.5 100.500v6M999.5 100.500v6M1067.5 100.500v6M1135.5 100.500v6M1204.5 100.500v6M1272.5 100.500v6M1340.5 100.500v6M1409.5 100.500v6M1477.5 100.500v6M1546.5 100.500v6M1614.5 100.500v6" stroke="#1a1a1a" stroke-width="1"/><path d="M76.5 89.500v17M144.8 89.500v17M213.2 89.500v17M281.5 89.500v17M349.9 89.500v17M418.2 89.500v17M486.6 89.500v17M555.0 89.500v17M623.3 89.500v17M691.6 89.500v17M760.0 89.500v17M828.3 89.500v17M896.7 89.500v17M965.0 89.500v17M1033.4 89.500v17M1101.8 89.500v17M1170.1 89.500v17M1238.5 89.500v17M1306.8 89.500v17M1375.2 89.500v17M1443.5 89.500v17M1511.9 89.500v17M1580.2 89.500v17" stroke="#161616" stroke-width="1.500"/>
<g font-family="DejaVu Sans,sans-serif" font-weight="bold" font-size="11" fill="#202734" text-anchor="end">
<text x="75.3" y="101">-100.0</text>
<text x="143.7" y="101">-50.0</text>
<text x="212.0" y="101">0.0</text>
<text x="280.3" y="101">50.0</text>
<text x="348.7" y="101">100.0</text>
<text x="417.1" y="101">150.0</text>
<text x="485.4" y="101">200.0</text>
<text x="553.8" y="101">250.0</text>
<text x="622.1" y="101">300.0</text>
<text x="690.4" y="101">350.0</text>
<text x="758.8" y="101">400.0</text>
<text x="827.1" y="101">450.0</text>
<text x="895.5" y="101">500.0</text>
<text x="963.8" y="101">550.0</text>
<text x="1032.2" y="101">600.0</text>
<text x="1100.5" y="101">650.0</text>
<text x="1168.9" y="101">700.0</text>
<text x="1237.2" y="101">750.0</text>
<text x="1305.6" y="101">800.0</text>
<text x="1374.0" y="101">850.0</text>
<text x="1442.3" y="101">900.0</text>
<text x="1510.7" y="101">950.0</text>
<text x="1579.0" y="101">1000.0</text>
</g></g></svg>
<svg style="left:33px;top:109px" width="18" height="855" viewBox="33 109 18 855"><clipPath id="cvr"><rect x="33" y="110" width="18" height="854"/></clipPath><g clip-path="url(#cvr)">
<path d="M46.500 110.5h3M46.500 124.5h3M46.500 130.5h3M46.500 137.5h3M46.500 144.5h3M46.500 158.5h3M46.500 165.5h3M46.500 171.5h3M46.500 178.5h3M46.500 192.5h3M46.500 199.5h3M46.500 206.5h3M46.500 212.5h3M46.500 226.5h3M46.500 233.5h3M46.500 240.5h3M46.500 247.5h3M46.500 260.5h3M46.500 267.5h3M46.500 274.5h3M46.500 281.5h3M46.500 295.5h3M46.500 301.5h3M46.500 308.5h3M46.500 315.5h3M46.500 329.5h3M46.500 336.5h3M46.500 342.5h3M46.500 349.5h3M46.500 363.5h3M46.500 370.5h3M46.500 377.5h3M46.500 383.5h3M46.500 397.5h3M46.500 404.5h3M46.500 411.5h3M46.500 418.5h3M46.500 431.5h3M46.500 438.5h3M46.500 445.5h3M46.500 452.5h3M46.500 465.5h3M46.500 472.5h3M46.500 479.5h3M46.500 486.5h3M46.500 500.5h3M46.500 506.5h3M46.500 513.5h3M46.500 520.5h3M46.500 534.5h3M46.500 541.5h3M46.500 547.5h3M46.500 554.5h3M46.500 568.5h3M46.500 575.5h3M46.500 582.5h3M46.500 588.5h3M46.500 602.5h3M46.500 609.5h3M46.500 616.5h3M46.500 623.5h3M46.500 636.5h3M46.500 643.5h3M46.500 650.5h3M46.500 657.5h3M46.500 670.5h3M46.500 677.5h3M46.500 684.5h3M46.500 691.5h3M46.500 705.5h3M46.500 711.5h3M46.500 718.5h3M46.500 725.5h3M46.500 739.5h3M46.500 746.5h3M46.500 752.5h3M46.500 759.5h3M46.500 773.5h3M46.500 780.5h3M46.500 787.5h3M46.500 793.5h3M46.500 807.5h3M46.500 814.5h3M46.500 821.5h3M46.500 828.5h3M46.500 841.5h3M46.500 848.5h3M46.500 855.5h3M46.500 862.5h3M46.500 875.5h3M46.500 882.5h3M46.500 889.5h3M46.500 896.5h3M46.500 910.5h3M46.500 916.5h3M46.500 923.5h3M46.500 930.5h3M46.500 944.5h3M46.500 951.5h3M46.500 958.5h3" stroke="#1a1a1a" stroke-width="1"/><path d="M43.500 151.5h6M43.500 219.5h6M43.500 288.5h6M43.500 356.5h6M43.500 424.5h6M43.500 493.5h6M43.500 561.5h6M43.500 629.5h6M43.500 698.5h6M43.500 766.5h6M43.500 834.5h6M43.500 903.5h6" stroke="#1a1a1a" stroke-width="1"/><path d="M33 117.3h16.500M33 185.6h16.500M33 254.0h16.500M33 322.4h16.500M33 390.7h16.500M33 459.1h16.500M33 527.4h16.500M33 595.8h16.500M33 664.1h16.500M33 732.4h16.500M33 800.8h16.500M33 869.1h16.500M33 937.5h16.500" stroke="#161616" stroke-width="1.500"/>
<g font-family="DejaVu Sans,sans-serif" font-weight="bold" font-size="11" fill="#202734">
<text transform="translate(43.500 116.3) rotate(-90)">0.0</text>
<text transform="translate(43.500 184.6) rotate(-90)">50.0</text>
<text transform="translate(43.500 253.0) rotate(-90)">100.0</text>
<text transform="translate(43.500 321.4) rotate(-90)">150.0</text>
<text transform="translate(43.500 389.7) rotate(-90)">200.0</text>
<text transform="translate(43.500 458.1) rotate(-90)">250.0</text>
<text transform="translate(43.500 526.4) rotate(-90)">300.0</text>
<text transform="translate(43.500 594.8) rotate(-90)">350.0</text>
<text transform="translate(43.500 663.1) rotate(-90)">400.0</text>
<text transform="translate(43.500 731.4) rotate(-90)">450.0</text>
<text transform="translate(43.500 799.8) rotate(-90)">500.0</text>
<text transform="translate(43.500 868.1) rotate(-90)">550.0</text>
<text transform="translate(43.500 936.5) rotate(-90)">600.0</text>
</g></g></svg>
<div class="a" style="left:1606px;top:109px;width:17px;height:837px;background:#f0f0f0"></div>
<div class="a" style="left:1607px;top:519px;width:13px;height:17px;background:#cdcdcd"></div>
<div class="a" style="left:51px;top:946px;width:1555px;height:18px;background:#f0f0f0"></div>
<div class="a" style="left:821px;top:948px;width:14px;height:14px;background:#cdcdcd"></div>
<svg style="left:52px;top:109px" width="1572" height="856" viewBox="52 109 1572 856" fill="none" stroke="#4c4c4c" stroke-width="2"><path d="M1610 120l3.200-3.200 3.200 3.200M1610 935.500l3.200 3.200 3.200-3.200M62 951.500l-3.200 3.200 3.200 3.200M1594.500 951.500l3.200 3.200-3.200 3.200"/></svg>
<div class="a" style="left:0;top:964px;width:1628px;height:1px;background:#fff"></div>
<svg id="cv" style="left:53px;top:110px" width="1551" height="835" viewBox="53 110 1551 835">
<path d="M281.5 118v818M349.9 118v818M418.2 118v818M486.6 118v818M555.0 118v818M623.3 118v818M691.6 118v818M760.0 118v818M828.4 118v818M896.7 118v818M965.0 118v818M1033.4 118v818M1101.8 118v818M1170.1 118v818M1238.5 118v818M1306.8 118v818M1375.2 118v818" stroke="#8c8c8c" stroke-width="1" stroke-dasharray="3 3" fill="none"/>
<path d="M214 185.6h1227M214 254.0h1227M214 322.4h1227M214 390.7h1227M214 459.1h1227M214 527.4h1227M214 595.7h1227M214 664.1h1227M214 732.5h1227M214 800.8h1227M214 869.1h1227" stroke="#8c8c8c" stroke-width="1" stroke-dasharray="3 3" fill="none"/>
<rect x="213" y="117.300" width="1229" height="818.700" fill="none" stroke="#000" stroke-width="2"/>
<path d="M213 118v24M214 117.300h24" stroke="#0000e8" stroke-width="2.400"/><path d="M213 148l-5-10 5 2.500 5-2.500zM244 117.300l-10-5 2.500 5-2.500 5z" fill="#0000e8"/><rect x="210" y="114.500" width="6" height="6" fill="#f00"/>
<rect x="582.500" y="175.500" width="14.500" height="14.500" fill="#00e000" stroke="#1a5a1a" stroke-width="1"/>
<g transform="translate(585 180) scale(0.17553)" fill="none" stroke-linejoin="round"><path d="M213 30L395 30Q408 32 408 45L408 222L300 222Q272 218 258 198L190 95Q172 62 190 45Q200 32 213 30ZM422 30L600 30Q625 35 633 55Q640 78 625 100L560 195Q540 220 515 222L408 222M408 45Q410 32 422 30M216 75a14 14 0 1 0 28 0a14 14 0 1 0 -28 0zM363 68a14 14 0 1 0 28 0a14 14 0 1 0 -28 0zM431 70a14 14 0 1 0 28 0a14 14 0 1 0 -28 0zM576 75a14 14 0 1 0 28 0a14 14 0 1 0 -28 0zM290 147h22q3 0 3 3v24q0 3-3 3h-22q-3 0-3-3v-24q0-3 3-3zM506 147h22q3 0 3 3v24q0 3-3 3h-22q-3 0-3-3v-24q0-3 3-3zM62 103C38 125 32 200 68 228Q100 246 132 228C166 200 160 125 137 103L137 190L128 190L128 95L112 95L112 190L88 190L88 95L72 95L72 190L62 190Z M62 205Q100 225 137 205M68 258L130 258L130 335L160 335L160 400L130 400L130 475L68 475L68 400L38 400L38 335L68 335ZM178 185L245 185L245 238L272 238L272 305L250 380L250 390L218 390L218 410L205 410L205 395L195 395L195 420L245 420L245 440Q230 462 205 460Q180 450 178 430L178 305L150 305L150 238L178 238ZM350 240L480 240Q500 245 515 262L565 335Q580 365 572 392Q560 420 540 422L290 422Q262 415 258 385Q255 360 268 340L318 262Q332 245 350 240ZM290 428L540 428Q565 435 572 460Q578 490 562 515L515 585Q500 603 478 607L350 607Q330 603 318 588L268 512Q255 490 260 460Q268 432 290 428ZM361 290a17 17 0 1 0 34 0a17 17 0 1 0 -34 0zM435 290a17 17 0 1 0 34 0a17 17 0 1 0 -34 0zM288 375a17 17 0 1 0 34 0a17 17 0 1 0 -34 0zM510 375a17 17 0 1 0 34 0a17 17 0 1 0 -34 0zM288 470a17 17 0 1 0 34 0a17 17 0 1 0 -34 0zM510 470a17 17 0 1 0 34 0a17 17 0 1 0 -34 0zM361 555a17 17 0 1 0 34 0a17 17 0 1 0 -34 0zM435 555a17 17 0 1 0 34 0a17 17 0 1 0 -34 0zM780 22Q900 25 960 110Q990 160 985 240L985 405Q985 412 975 412L955 412L952 245L930 245L928 405L760 392L752 408L915 435Q930 445 915 458Q900 468 880 460L700 440Q610 410 570 330Q545 250 590 160Q650 50 780 22ZM628 208Q680 130 768 98L758 80Q665 110 612 195Z M690 150L925 405M839.9 78.5L907.9 110.2L896.1 135.5L828.1 103.8zM607.5 286.9L632.8 275.1L664.5 343.1L639.2 354.9zM600 490Q650 465 720 468L890 475Q905 480 905 495L900 505L745 510L738 525L900 530L880 690L905 695L925 535Q930 525 945 530Q955 535 955 560L935 740Q920 830 840 875Q760 905 680 880Q600 850 550 760Q500 660 530 570Q560 510 600 490ZM900 530L640 760M580 685Q620 780 712 825L702 842Q600 790 565 695ZM602.1 547.4L627.5 559.2L597.9 622.6L572.5 610.8zM765.1 818.2L833.1 786.5L844.9 811.8L776.9 843.5zM40 535L258 535L258 560L140 560L140 572L120 572L120 585L258 585L258 660L140 660L140 672L120 672L120 688L258 688L258 710L40 710Q30 710 30 700L30 545Q30 535 40 535ZM295 590L315 590Q325 600 325 625Q325 650 315 660L295 660L295 645L275 645L275 608L295 608ZM345 810L345 665Q355 640 385 635Q410 640 430 655L500 720Q535 750 540 780L540 815L480 815L480 840L440 840L440 850L420 850L420 870L480 870L480 893L385 893L385 810ZM373 688a17 17 0 1 0 34 0a17 17 0 1 0 -34 0zM458 757a17 17 0 1 0 34 0a17 17 0 1 0 -34 0zM42 997L42 770Q45 730 82 725Q118 730 120 770L120 997M148 997L148 770Q152 730 187 725Q222 730 225 770L225 997M65 768a17 17 0 1 0 34 0a17 17 0 1 0 -34 0zM170 768a17 17 0 1 0 34 0a17 17 0 1 0 -34 0zM295 705L315 705L315 790L280 790L280 770L268 770L268 735L295 735ZM268 790Q243 802 248 838Q256 866 285 866Q313 860 313 830L313 790M266 835a16 16 0 1 0 32 0a16 16 0 1 0 -32 0zM340 845L360 845L360 930L330 930L330 910L318 910L318 875L340 875ZM318 930Q292 945 296 975L300 997M360 997L360 930M313 972a15 15 0 1 0 30 0a15 15 0 1 0 -30 0zM400 995L572 828L606 858M606 858L620 872L660 908L745 908L745 950L685 950L685 958L668 958L668 975L745 975L745 997M506.8 952.1L595.5 857.0L607.2 867.9L518.5 963.0zM820 997Q870 900 900 850Q930 815 975 822Q1010 835 1015 880Q1015 940 990 997M960.1 849.0L982.1 866.2L943.9 915.0L921.9 897.8zM1020 225h25v140h-25zM1070 770h20v205h-20zM965 450L1000 450L1000 545L1025 555L1025 450L1060 450L1060 575L1139 640M965 450L965 625L1030 625L1030 650L965 650L965 710L1040 745L1040 997M971.5 51.5Q974.4 42.9 985.8 41.2L1137.2 41.2Q1145.8 45.8 1137.2 57.2L1065.8 125.8L997.2 125.8Q985.8 114.4 994.4 104.1L1051.5 101.8L1062.9 94.4L1062.9 77.2L974.4 77.2Q968.6 65.8 971.5 51.5ZM1000 430L1000 172L1139 104M1000 430L1139 430M1139 155L1092 171L1092 250L1139 250M1094 325L1094 270L1139 270L1139 298L1117 298L1117 350L1141 350L1141 325M1117 372h24v35h-24zM1125 630L1125 997" stroke="#080808" stroke-width="1" vector-effect="non-scaling-stroke"/><path d="M1139 131L1065 161L1065 325L1139 325" stroke="#0c0c0c" stroke-width="1.8" vector-effect="non-scaling-stroke"/><g fill="#e00000" stroke="#e00000" stroke-width="2.28" font-family="Liberation Sans,sans-serif" font-weight="bold" font-size="30.2" text-anchor="middle"><text x="262" y="88.9">F</text><text x="380" y="108.9" transform="rotate(90 380 98)">b</text><text x="435" y="108.9">X</text><text x="560" y="88.9" transform="rotate(180 560 78)">E</text><text x="335" y="170.9" transform="rotate(270 335 160)">Y</text><text x="485" y="170.9">R</text><text x="98" y="232.9">J</text><text x="98" y="288.9" transform="rotate(90 98 278)">K</text><text x="98" y="335.9">M</text><text x="98" y="420.9" transform="rotate(180 98 410)">h</text><text x="98" y="470.9" transform="rotate(270 98 460)">d</text><text x="172" y="285.9">N</text><text x="245" y="285.9">A</text><text x="210" y="360.9" transform="rotate(90 210 350)">L</text><text x="205" y="442.9">P</text><text x="378" y="272.9" transform="rotate(180 378 262)">V</text><text x="452" y="272.9" transform="rotate(270 452 262)">F</text><text x="305" y="355.9">b</text><text x="527" y="355.9">X</text><text x="305" y="510.9" transform="rotate(90 305 500)">E</text><text x="525" y="510.9">Y</text><text x="378" y="595.9" transform="rotate(180 378 585)">R</text><text x="452" y="595.9" transform="rotate(270 452 585)">J</text><text x="778" y="90.9">K</text><text x="845" y="150.9">M</text><text x="940" y="225.9" transform="rotate(90 940 215)">h</text><text x="610" y="235.9">d</text><text x="668" y="308.9" transform="rotate(180 668 298)">N</text><text x="740" y="412.9" transform="rotate(270 740 402)">A</text><text x="1005" y="303.9">L</text><text x="1085" y="80.9">P</text><text x="710" y="525.9" transform="rotate(90 710 515)">V</text><text x="630" y="615.9">F</text><text x="568" y="688.9" transform="rotate(180 568 678)">b</text><text x="892" y="725.9" transform="rotate(270 892 715)">X</text><text x="790" y="795.9">E</text><text x="712" y="850.9">Y</text><text x="95" y="582.9" transform="rotate(90 95 572)">R</text><text x="95" y="685.9">J</text><text x="293" y="638.9" transform="rotate(180 293 628)">K</text><text x="390" y="722.9" transform="rotate(270 390 712)">M</text><text x="475" y="802.9">h</text><text x="430" y="832.9">d</text><text x="405" y="862.9" transform="rotate(90 405 852)">N</text><text x="82" y="808.9">A</text><text x="185" y="808.9" transform="rotate(180 185 798)">L</text><text x="288" y="760.9" transform="rotate(270 288 750)">P</text><text x="255" y="818.9">V</text><text x="333" y="900.9">F</text><text x="305" y="955.9" transform="rotate(90 305 945)">b</text><text x="495" y="990.9">X</text><text x="645" y="973.9" transform="rotate(180 645 963)">E</text><text x="978" y="915.9" transform="rotate(270 978 905)">Y</text><text x="1055" y="885.9">R</text><text x="1015" y="585.9">J</text><text x="1048" y="650.9" transform="rotate(90 1048 640)">K</text></g></g>
<g transform="translate(785 180) scale(0.17553)" fill="none" stroke-linejoin="round"><path d="M0 100L175 20L780 20L1090 175L1090 415Q1088 428 1075 428L780 428L780 680L755 680L755 830L780 840L780 997M0 428L175 428L175 680L195 680L195 840L175 850L175 997M475 20L475 540M262 997L262 760Q270 560 475 540Q680 560 690 760L690 997M280 997L385 660Q400 625 430 625Q460 630 470 660L470 997M470 660Q480 630 515 625Q545 628 560 660L660 997M412 667a16 16 0 1 0 32 0a16 16 0 1 0 -32 0zM499 667a16 16 0 1 0 32 0a16 16 0 1 0 -32 0zM190 48h172v24h-172zM583 48h170v24h-170zM0 150L120 110L135 115L135 245L0 245M225 117h23v40h-23zM158 325L158 270L208 270L208 325M158 300L185 300L185 350L158 350ZM158 372h27v35h-27zM815 115L830 110L995 185L995 245L815 245ZM700 117h27v40h-27zM745 325L745 270L790 270L790 298L765 298L765 350L790 350L790 325M995 325L995 270L950 270L950 298L972 298L972 350L948 350L948 325M765 372h25v35h-25zM948 372h24v35h-24zM1045 225h23v143h-23zM146 450L111 450L111 545L86 555L86 450L51 450L51 575L-28 640M146 450L146 625L81 625L81 650L146 650L146 710L71 745L71 997M108 750Q120 735 132 750L132 805L155 805L155 830L132 830L132 880Q120 895 108 880L108 830L88 830L88 805L108 805ZM108 920Q120 905 132 920L132 970L155 970L155 997M108 920L108 970L88 970L88 997M15 770h25v205h-25zM815 505L840 505L840 482L920 482L920 505L945 505L945 605L970 625L970 775L950 775L950 885L972 895L972 997M815 505L815 625L790 625L790 775L810 775L810 885L790 895L790 997M960 440L1075 440Q1092 445 1092 460L1092 997M960 440Q943 450 950 470L960 480L1025 480L1025 503L945 503M1025 480L1035 480L1035 503L1025 503" stroke="#080808" stroke-width="1" vector-effect="non-scaling-stroke"/><path d="M0 130L95 90L288 90L288 325L0 325M665 90L855 90L1020 165L1020 325L665 325Z" stroke="#0c0c0c" stroke-width="1.8" vector-effect="non-scaling-stroke"/><g fill="#e00000" stroke="#e00000" stroke-width="2.28" font-family="Liberation Sans,sans-serif" font-weight="bold" font-size="30.2" text-anchor="middle"><text x="303" y="102.9">M</text><text x="643" y="102.9" transform="rotate(180 643 92)">h</text><text x="262" y="150.9" transform="rotate(270 262 140)">d</text><text x="687" y="150.9">N</text><text x="15" y="310.9">A</text><text x="142" y="310.9" transform="rotate(90 142 300)">L</text><text x="805" y="308.9">P</text><text x="932" y="308.9" transform="rotate(180 932 298)">V</text><text x="18" y="400.9" transform="rotate(270 18 390)">F</text><text x="140" y="400.9">b</text><text x="808" y="400.9">X</text><text x="930" y="400.9" transform="rotate(90 930 390)">E</text><text x="1080" y="303.9">Y</text><text x="882" y="510.9" transform="rotate(180 882 500)">R</text><text x="1055" y="502.9" transform="rotate(270 1055 492)">J</text><text x="95" y="585.9">K</text><text x="65" y="650.9">M</text><text x="212" y="770.9" transform="rotate(90 212 760)">h</text><text x="735" y="770.9">d</text><text x="120" y="770.9" transform="rotate(180 120 760)">N</text><text x="120" y="805.9" transform="rotate(270 120 795)">A</text><text x="120" y="850.9">L</text><text x="120" y="885.9">P</text><text x="120" y="945.9" transform="rotate(90 120 935)">V</text><text x="120" y="978.9">F</text><text x="55" y="885.9" transform="rotate(180 55 875)">b</text><text x="460" y="677.9" transform="rotate(270 460 667)">X</text><text x="487" y="677.9">E</text><text x="348" y="982.9">Y</text><text x="590" y="982.9" transform="rotate(90 590 972)">R</text></g></g>
<g transform="translate(585 355) scale(0.17553)" fill="none" stroke-linejoin="round"><path d="M35 0L35 262L42 262L42 480Q45 518 82 520Q120 518 122 480L122 262L130 262L130 0M68 0L68 250L75 262L95 262L95 0M150 0L150 262L148 262L148 480Q152 518 187 520Q222 518 225 480L225 262L240 262L240 0M175 0L175 262L205 262L205 0M65 483a17 17 0 1 0 34 0a17 17 0 1 0 -34 0zM170 483a17 17 0 1 0 34 0a17 17 0 1 0 -34 0zM385 0Q325 45 322 100Q330 150 375 162L630 162L630 15L745 15L745 0M349 98a33 33 0 1 0 66 0a33 33 0 1 0 -66 0zM498 95h80v27h-80zM258 175Q282 160 310 178Q322 190 322 215L322 330L300 330L300 300L275 300L275 240L248 240L248 200Q250 182 258 175ZM267 205a16 16 0 1 0 32 0a16 16 0 1 0 -32 0zM262 345Q285 332 305 350Q315 365 312 400L312 505L288 505L288 478L268 478L268 440L288 440L288 420Q250 415 248 385Q248 358 262 345ZM263 378a15 15 0 1 0 30 0a15 15 0 1 0 -30 0zM345 175L490 172Q505 175 500 190L440 255Q420 268 390 265Q355 258 355 235L420 232L430 225L430 208L420 205L335 205Q332 185 345 175ZM325 285L455 285L455 260L540 260L540 240Q520 225 525 200Q535 175 570 172Q605 178 615 205Q615 230 600 245L600 282L650 282L650 598L600 598L600 640Q615 650 612 675Q600 700 570 702Q535 695 528 670Q525 645 540 635L540 615L455 615L455 598L325 598L325 550L372 550L372 525L325 525L325 352L372 352L372 328L325 328ZM225 545L245 540Q262 575 262 615L275 615L275 530L300 525Q305 600 300 690Q285 700 270 680L218 600Q215 570 225 545ZM222 760Q240 730 270 720L290 725L300 745L290 750L305 770L298 790L298 940L240 940L240 915L258 915L258 965L222 965ZM400 715L480 715L480 997M400 715L400 740L430 740L430 760L400 760L400 810L355 810L300 997M490 715L565 715L565 740L540 740L540 760L565 760L565 810L615 815L615 997M490 715L490 997M615 960L565 960L555 965L555 980L565 985L615 985M640 100Q650 72 700 68Q745 70 760 105L790 200Q830 290 835 360Q830 420 790 480Q740 560 720 650Q715 720 690 745Q660 760 635 735Q615 700 650 670Q655 600 660 520Q680 440 720 380Q740 330 720 270Q680 200 640 150Q632 125 640 100ZM688.8 105.4L725.6 142.2L707.2 160.6L670.4 123.8zM756.6 424.0L776.2 437.7L707.4 536.0L687.8 522.3zM657 712a15 15 0 1 0 30 0a15 15 0 1 0 -30 0zM800 0Q790 40 800 90Q830 200 870 290Q890 350 885 420Q865 450 875 480Q900 510 940 490Q965 465 950 430Q930 380 940 300Q920 220 895 150Q880 80 905 40Q920 10 940 0M847.7 176.9L865.5 167.8L922.3 279.1L904.5 288.2zM893 463a15 15 0 1 0 30 0a15 15 0 1 0 -30 0zM1042 0L1042 71L965 97L965 575L1016 575L1016 598L911 598L911 628L916 628L916 640L976 640L986 645L986 660L976 665L916 665L916 697L1006 697L1125 541L1125 0M1139 340L1056 340L1046 345L1046 360L1056 365L1139 365M770 535L925 520Q940 525 930 540L850 600Q820 615 795 600Q780 585 790 575L850 575L860 570L860 558L850 555L770 555Q762 545 770 535ZM735 722L810 650Q830 638 870 642Q892 650 885 672L830 672L820 678L820 692L830 698L905 698Q900 718 880 722ZM650 765L730 765L730 745L800 745L800 765L880 765L880 745L960 745L960 765L1030 765L1030 790L1060 800L1060 870L1030 880L1030 900L960 900L960 925L800 925L800 900L730 900L730 880L650 880L650 870L625 860L625 810L650 800ZM722 930L722 997M745 930L745 997M765 930L765 997M850 930L850 997M870 930L870 997M895 930L895 997M950 965Q990 945 1035 965Q990 985 950 965ZM970 958L1015 958" stroke="#080808" stroke-width="1" vector-effect="non-scaling-stroke"/><g fill="#e00000" stroke="#e00000" stroke-width="2.28" font-family="Liberation Sans,sans-serif" font-weight="bold" font-size="30.2" text-anchor="middle"><text x="115" y="135.9">J</text><text x="215" y="135.9" transform="rotate(180 215 125)">K</text><text x="425" y="70.9" transform="rotate(270 425 60)">M</text><text x="540" y="85.9">h</text><text x="265" y="238.9">d</text><text x="290" y="295.9" transform="rotate(90 290 285)">N</text><text x="255" y="410.9">A</text><text x="282" y="472.9" transform="rotate(180 282 462)">L</text><text x="450" y="210.9" transform="rotate(270 450 200)">P</text><text x="528" y="295.9">V</text><text x="388" y="352.9">F</text><text x="388" y="550.9" transform="rotate(90 388 540)">b</text><text x="525" y="610.9">X</text><text x="285" y="650.9" transform="rotate(180 285 640)">E</text><text x="278" y="750.9" transform="rotate(270 278 740)">Y</text><text x="250" y="965.9">R</text><text x="680" y="165.9">J</text><text x="905" y="220.9" transform="rotate(90 905 210)">K</text><text x="705" y="475.9">M</text><text x="900" y="440.9" transform="rotate(180 900 430)">h</text><text x="685" y="688.9" transform="rotate(270 685 678)">d</text><text x="1020" y="360.9">N</text><text x="875" y="555.9">A</text><text x="795" y="712.9" transform="rotate(90 795 702)">L</text><text x="1028" y="598.9">P</text><text x="1005" y="665.9" transform="rotate(180 1005 655)">V</text><text x="1090" y="765.9" transform="rotate(270 1090 755)">F</text><text x="640" y="842.9">b</text><text x="1040" y="842.9">X</text><text x="432" y="790.9" transform="rotate(90 432 780)">E</text><text x="545" y="790.9">Y</text><text x="468" y="758.9" transform="rotate(180 468 748)">R</text><text x="502" y="768.9" transform="rotate(270 502 758)">J</text><text x="530" y="980.9">K</text><text x="82" y="458.9">M</text><text x="187" y="458.9" transform="rotate(90 187 448)">h</text><text x="990" y="968.9">d</text></g></g>
<g transform="translate(785 355) scale(0.17553)" fill="none" stroke-linejoin="round"><path d="M69 0L69 71L146 97L146 575L95 575L95 598L200 598L200 628L195 628L195 640L135 640L125 645L125 660L135 665L195 665L195 697L105 697L-14 541M0 340L55 340L65 345L65 360L55 365L0 365M110 0L110 55Q122 70 134 55L134 0M179 40Q190 25 202 40L202 97L225 97L225 120L202 120L202 180Q190 195 179 180L179 120L157 120L157 97L179 97ZM761 40Q750 25 738 40L738 97L715 97L715 120L738 120L738 180Q750 195 761 180L761 120L783 120L783 97L761 97ZM173 0L173 11L266 11L266 0M767 0L767 11L674 11L674 0M281 0L240 140Q222 185 245 200Q265 208 273 193L341 -7L360 0L285 235L355 380Q385 435 440 432Q468 420 470 385M470 0L470 385M659 0L700 140Q718 185 695 200Q675 208 667 193L599 -7L580 0L655 235L585 380Q555 435 500 432Q472 420 470 385M404 385a16 16 0 1 0 32 0a16 16 0 1 0 -32 0zM504 385a16 16 0 1 0 32 0a16 16 0 1 0 -32 0zM165 208L240 208Q255 212 255 228L255 420Q253 438 238 440L165 440Q155 438 155 425L155 405L215 405L215 380L155 380L155 262L215 262L215 240L155 240L155 222Q156 210 165 208ZM240 448L455 448Q470 452 470 465L470 570L470 570L415 570L405 575L405 590L415 595L470 595L470 640L470 640L415 640L405 645L405 660L415 665L470 665L470 710L470 715L415 715L405 720L405 735L415 740L470 740L470 785L470 785L415 785L405 790L405 805L415 810L470 810L470 855L470 860L415 860L405 865L405 880L415 885L470 885L470 930L470 930L415 930L405 935L405 950L415 955L470 955L470 997M240 448Q228 455 232 475L235 488L310 488L320 492L320 505L310 510L205 510L205 625L225 625L225 775L150 775L150 750Q140 738 130 750L130 920Q140 935 150 925L150 895L225 895L225 997M545 488L610 488L610 458L720 458L720 545L665 545L665 712L720 712L720 997M545 488L545 790L520 790L520 940L545 945L545 997M720 458L835 455L845 460L845 472L835 478L755 478L755 572L735 572L735 725L755 730L755 997M845 240Q830 205 795 202Q762 210 765 240L790 255Q800 300 795 320L760 330Q745 350 760 365L810 370L810 392L760 392L700 410Q680 430 700 450L720 455M650 300Q670 265 700 265L740 280Q750 300 735 330L680 410Q660 440 650 420ZM665 330L700 285M680 345L720 290M690 320L675 340M790 0L790 40L810 45L810 165L845 190L925 190L925 165L945 165L945 45L970 40L970 0M1092 0L1092 215Q1090 232 1075 232L960 232Q945 225 948 205L950 195L1025 195L1035 190L1035 170L1025 165L945 165M845 240L845 310L870 310L870 248L1035 248L1035 335Q1042 352 1052 338L1055 248L1090 248L1090 430L935 430L935 800L880 800L880 968L935 968L935 997M960 448L1075 448Q1088 452 1088 465L1088 945Q1085 962 1070 965L960 965Q945 960 948 940L950 928L1025 928L1035 922L1035 905L1025 900L950 900L950 820L970 815L970 745L950 740L950 665L970 660L970 595L950 590L950 510L1025 510L1035 505L1035 490L1025 485L950 485L948 465Q947 452 960 448Z" stroke="#080808" stroke-width="1" vector-effect="non-scaling-stroke"/><g fill="#e00000" stroke="#e00000" stroke-width="2.28" font-family="Liberation Sans,sans-serif" font-weight="bold" font-size="30.2" text-anchor="middle"><text x="120" y="30.9" transform="rotate(180 120 20)">N</text><text x="120" y="58.9" transform="rotate(270 120 48)">A</text><text x="190" y="70.9">L</text><text x="190" y="120.9">P</text><text x="190" y="170.9" transform="rotate(90 190 160)">V</text><text x="750" y="70.9">F</text><text x="750" y="120.9" transform="rotate(180 750 110)">b</text><text x="750" y="170.9" transform="rotate(270 750 160)">X</text><text x="880" y="185.9">E</text><text x="1050" y="188.9">Y</text><text x="235" y="265.9" transform="rotate(90 235 255)">R</text><text x="235" y="405.9">J</text><text x="85" y="360.9" transform="rotate(180 85 350)">K</text><text x="445" y="395.9" transform="rotate(270 445 385)">M</text><text x="492" y="395.9">h</text><text x="815" y="288.9">d</text><text x="855" y="338.9" transform="rotate(90 855 328)">N</text><text x="825" y="388.9">A</text><text x="665" y="370.9" transform="rotate(180 665 360)">L</text><text x="345" y="505.9" transform="rotate(270 345 495)">P</text><text x="75" y="590.9">V</text><text x="105" y="665.9">F</text><text x="670" y="492.9" transform="rotate(90 670 482)">b</text><text x="855" y="475.9">X</text><text x="1050" y="508.9" transform="rotate(180 1050 498)">E</text><text x="1045" y="395.9" transform="rotate(270 1045 385)">Y</text><text x="380" y="590.9">R</text><text x="380" y="665.9">J</text><text x="380" y="738.9" transform="rotate(90 380 728)">K</text><text x="380" y="810.9">M</text><text x="380" y="885.9" transform="rotate(180 380 875)">h</text><text x="380" y="955.9" transform="rotate(270 380 945)">d</text><text x="750" y="660.9">N</text><text x="540" y="875.9">A</text><text x="150" y="810.9" transform="rotate(90 150 800)">L</text><text x="150" y="892.9">P</text><text x="1050" y="920.9" transform="rotate(180 1050 910)">V</text><text x="45" y="770.9" transform="rotate(270 45 760)">F</text></g></g>
<g transform="translate(585 530) scale(0.17553)" fill="none" stroke-linejoin="round"><path d="M215 10L240 5Q245 40 245 70L265 70L265 0M300 0L300 160Q290 165 280 150L210 55Q205 30 215 10M215 195L240 185Q245 220 245 255L265 255L265 180L295 172Q302 260 295 340Q285 350 275 335L210 240Q205 215 215 195ZM308 -13L308 9L402 9L412 14L412 27L402 31L308 31L308 106L402 106L412 111L412 124L402 128L308 128L308 150L353 314L405 314L405 366L442 366L442 388L405 388L405 418L486 418L486 0M490 0L490 418L570 418L570 395L530 395L530 372L570 372L570 320L615 320L615 190L560 190L550 185L550 160L560 155L615 155L615 0M210 378L318 378L318 400L275 400L275 480L300 480L300 997M210 378L210 400L250 400L250 480L228 480L228 997M340 458L410 458L410 432L545 432L545 458L612 458L612 770L545 770L545 800L410 800L410 770L340 770ZM1139 412L1040 412L1040 390L880 390L880 412L628 412L628 727L880 727L880 752L1040 752L1040 727L1139 727M720 487h167v23h-167zM720 635h167v23h-167zM1004 570a58 58 0 1 0 116 0a58 58 0 1 0 -116 0zM712 0L712 100L698 378L915 378L905 100L905 0M742 0L742 190L768 190L768 0M848 0L848 190L870 190L870 0M1139 32L917 32L917 195L1073 195L1073 395L1139 395M1073 32L1073 -170M930 260Q945 250 960 262L1000 300L990 270L960 220Q975 208 995 218L1060 355Q1050 365 1040 355L950 320Q925 295 930 260ZM330 850L375 808Q395 805 390 825L350 870L360 885L410 830Q435 825 440 845L345 960Q322 970 322 940ZM350 997L530 815Q560 805 590 825Q620 850 625 900L625 997M525 873a33 33 0 1 0 66 0a33 33 0 1 0 -66 0z" stroke="#080808" stroke-width="1" vector-effect="non-scaling-stroke"/><g fill="#e00000" stroke="#e00000" stroke-width="2.28" font-family="Liberation Sans,sans-serif" font-weight="bold" font-size="30.2" text-anchor="middle"><text x="430" y="30.9">b</text><text x="430" y="128.9">X</text><text x="265" y="110.9" transform="rotate(90 265 100)">E</text><text x="265" y="295.9">Y</text><text x="530" y="182.9" transform="rotate(180 530 172)">R</text><text x="425" y="335.9" transform="rotate(270 425 325)">J</text><text x="548" y="340.9">K</text><text x="428" y="362.9">M</text><text x="545" y="365.9" transform="rotate(90 545 355)">h</text><text x="468" y="390.9">d</text><text x="500" y="395.9" transform="rotate(180 500 385)">N</text><text x="222" y="405.9" transform="rotate(270 222 395)">A</text><text x="300" y="405.9">L</text><text x="475" y="468.9">P</text><text x="475" y="788.9" transform="rotate(90 475 778)">V</text><text x="755" y="225.9">F</text><text x="852" y="225.9" transform="rotate(180 852 215)">b</text><text x="1005" y="330.9" transform="rotate(270 1005 320)">X</text><text x="960" y="422.9">E</text><text x="800" y="530.9">Y</text><text x="800" y="628.9" transform="rotate(90 800 618)">R</text><text x="980" y="582.9">J</text><text x="958" y="742.9" transform="rotate(180 958 732)">K</text><text x="348" y="910.9" transform="rotate(270 348 900)">M</text><text x="518" y="925.9">h</text><text x="440" y="998.9">d</text></g></g>
<g transform="translate(785 530) scale(0.17553)" fill="none" stroke-linejoin="round"><path d="M119 -170L119 32L40 32L30 37L30 50L40 54L119 54L119 180L40 180L30 185L30 198L40 202L119 202L119 395L0 395M0 412L72 412L72 727L0 727M470 0L470 15L415 15L405 20L405 35L415 40L470 40L470 88L415 88L405 93L405 108L415 112L470 112L470 215Q465 235 450 238L245 238Q228 230 232 210L235 198L310 198L320 192L320 178L310 172L205 172L205 0M545 0L545 40L625 40L635 45L635 60L625 65L490 65Q470 80 480 100L600 125L615 130L615 150L545 150Q535 170 550 195Q590 220 580 270Q545 265 550 295Q570 320 610 310Q640 290 635 205L660 205L660 270L825 270L825 165L845 165L845 270L880 270L880 85L720 85L720 0M755 0L755 30L830 35L830 55L935 55L935 0M895 255L895 110Q910 62 985 58Q1060 62 1072 110L1072 255L1045 260L1045 292L920 292L920 260ZM200 248L410 248Q428 255 428 275L428 360L428 360L385 360L372 365L372 380L385 385L428 385L428 425L385 425L372 430L372 445L385 450L428 450L428 495L385 495L372 500L372 515L385 520L428 520L428 568L385 568L372 573L372 588L385 593L428 593L428 635L385 635L372 640L372 655L385 660L428 660L428 740Q425 762 405 765L205 765Q185 755 188 735L190 725L270 725L280 720L280 705L270 700L155 700L155 622L180 622L180 520L105 520L105 550Q95 565 85 550L85 465Q95 448 105 465L105 490L180 490L180 390L155 390L155 310L270 310L280 305L280 290L270 285L190 285L185 270Q185 252 200 248ZM437 325L750 325L750 732L675 732L675 675L655 675L655 732L525 732L525 675L505 675L505 732L437 732ZM495 360L692 360Q712 362 712 382L712 518Q710 538 692 540L495 540Q477 538 475 518L475 382Q477 362 495 360ZM498 485L580 410L640 405Q655 410 650 430L590 432L585 440L650 450Q675 455 670 480L650 492L505 492ZM772 390L845 390L845 530L1018 530L1018 390L1088 390L1088 732L940 732L940 675L920 675L920 732L772 732ZM850 370L880 370L880 345L960 345L960 370L1008 370L1008 490L960 490L960 518L880 518L880 490L850 490Z" stroke="#080808" stroke-width="1" vector-effect="non-scaling-stroke"/><g fill="#e00000" stroke="#e00000" stroke-width="2.28" font-family="Liberation Sans,sans-serif" font-weight="bold" font-size="30.2" text-anchor="middle"><text x="10" y="52.9" transform="rotate(90 10 42)">N</text><text x="10" y="200.9">A</text><text x="30" y="242.9" transform="rotate(180 30 232)">L</text><text x="380" y="32.9" transform="rotate(270 380 22)">P</text><text x="380" y="108.9">V</text><text x="345" y="193.9">F</text><text x="648" y="68.9" transform="rotate(90 648 58)">b</text><text x="612" y="148.9">X</text><text x="602" y="248.9" transform="rotate(180 602 238)">E</text><text x="645" y="202.9" transform="rotate(270 645 192)">Y</text><text x="880" y="45.9">R</text><text x="835" y="145.9">J</text><text x="920" y="250.9" transform="rotate(90 920 240)">K</text><text x="1048" y="250.9">M</text><text x="300" y="310.9" transform="rotate(180 300 300)">h</text><text x="345" y="378.9" transform="rotate(270 345 368)">d</text><text x="345" y="445.9">N</text><text x="345" y="518.9">A</text><text x="345" y="588.9" transform="rotate(90 345 578)">L</text><text x="345" y="655.9">P</text><text x="300" y="725.9" transform="rotate(180 300 715)">V</text><text x="185" y="515.9" transform="rotate(270 185 505)">F</text><text x="558" y="478.9">b</text><text x="515" y="665.9">X</text><text x="665" y="665.9" transform="rotate(90 665 655)">E</text><text x="920" y="375.9">Y</text><text x="920" y="502.9" transform="rotate(180 920 492)">R</text><text x="855" y="568.9" transform="rotate(270 855 558)">J</text><text x="1005" y="568.9">K</text><text x="930" y="668.9">M</text></g></g>
<g transform="translate(585 705) scale(0.17553)" fill="none" stroke-linejoin="round"><path d="M45 205L135 205Q148 215 135 228L100 228L100 312L122 312L122 845L100 845L100 922L135 922Q148 932 135 945L45 945Q30 932 45 922L78 922L78 845L55 845L55 312L78 312L78 228L45 228Q30 215 45 205ZM228 0L228 100L210 105L210 122L318 122L318 100L300 100L300 0M165 305L165 240Q175 200 210 175L290 130Q330 120 350 150Q360 165 360 200L360 290L322 310L322 340L300 345L290 335L225 335L225 355L290 355L322 350L322 385L225 385L225 305ZM298 175a17 17 0 1 0 34 0a17 17 0 1 0 -34 0zM213 248a17 17 0 1 0 34 0a17 17 0 1 0 -34 0zM625 0L620 120L482 120L482 240L445 240L445 190L440 175L430 165L420 175L415 190L415 240L380 240L380 155L338 108L440 10M555 -10h27v80h-27zM296.9 81.4L421.0 0.8L435.1 22.6L311.0 103.2zM297 52L352 -3M210 395L320 395Q375 410 380 480L380 620Q375 695 320 710L210 710L210 665L300 665L310 660L310 645L300 640L210 640L210 468L300 468L310 462L310 448L300 443L210 443ZM258 550a37 37 0 1 0 74 0a37 37 0 1 0 -74 0zM520 135L598 135L598 210L632 215L632 300L570 300L560 310L570 320L598 320L598 500L570 500L560 510L570 522L632 525L632 620L598 625L598 698L520 698L520 535L440 535Q395 525 390 470L390 355Q395 305 440 298L520 298ZM435 325L520 325L520 505L435 505Q418 500 418 485L418 345Q420 328 435 325M527 170a28 28 0 1 0 56 0a28 28 0 1 0 -56 0zM527 660a28 28 0 1 0 56 0a28 28 0 1 0 -56 0zM150 945L150 742L178 742L178 825Q190 840 202 825L202 742L275 742L275 825Q287 840 300 825L300 742L330 742L330 945ZM398 722L618 722L618 765L575 770L575 870L665 875L665 945L350 945L350 875L440 870L440 770L398 765ZM478 742L538 742Q550 754 538 766L478 766Q466 754 478 742ZM478 790L538 790Q550 802 538 814L478 814Q466 802 478 790ZM478 838L538 838Q550 850 538 862L478 862Q466 850 478 838ZM478 895L538 895Q550 907 538 919L478 919Q466 907 478 895ZM355 910a25 25 0 1 0 50 0a25 25 0 1 0 -50 0zM607 910a25 25 0 1 0 50 0a25 25 0 1 0 -50 0z" stroke="#080808" stroke-width="1" vector-effect="non-scaling-stroke"/><g fill="#e00000" stroke="#e00000" stroke-width="2.28" font-family="Liberation Sans,sans-serif" font-weight="bold" font-size="30.2" text-anchor="middle"><text x="55" y="225.9" transform="rotate(90 55 215)">h</text><text x="120" y="225.9">d</text><text x="55" y="945.9" transform="rotate(180 55 935)">N</text><text x="120" y="945.9" transform="rotate(270 120 935)">A</text><text x="225" y="118.9">L</text><text x="300" y="118.9">P</text><text x="315" y="215.9" transform="rotate(90 315 205)">V</text><text x="232" y="290.9">F</text><text x="270" y="328.9" transform="rotate(180 270 318)">b</text><text x="300" y="352.9" transform="rotate(270 300 342)">X</text><text x="535" y="42.9">E</text><text x="428" y="152.9">Y</text><text x="325" y="470.9" transform="rotate(90 325 460)">R</text><text x="325" y="665.9">J</text><text x="238" y="562.9" transform="rotate(180 238 552)">K</text><text x="535" y="328.9" transform="rotate(270 535 318)">M</text><text x="535" y="525.9">h</text><text x="192" y="862.9">d</text><text x="288" y="862.9" transform="rotate(90 288 852)">N</text><text x="418" y="755.9">A</text><text x="598" y="755.9" transform="rotate(180 598 745)">L</text><text x="460" y="842.9" transform="rotate(270 460 832)">P</text><text x="550" y="842.9">V</text></g></g>
<g transform="translate(0 0) scale(1.00000)" fill="none" stroke-linejoin="round"><path d="M695.3 696.2a34.0 34.0 0 1 0 68.0 0a34.0 34.0 0 1 0 -68.0 0zM726.9 662.6v10.6h4.8v-10.6M726.9 729.8v-10.6h4.8v10.6M695.7 693.8h10.6v4.8h-10.6M762.9 693.8h-10.6v4.8h10.6M721.4 696.2a7.9 7.9 0 1 0 15.8 0a7.9 7.9 0 1 0 -15.8 0zM765.9 696.2a34.0 34.0 0 1 0 68.0 0a34.0 34.0 0 1 0 -68.0 0zM797.5 662.6v10.6h4.8v-10.6M797.5 729.8v-10.6h4.8v10.6M766.3 693.8h10.6v4.8h-10.6M833.5 693.8h-10.6v4.8h10.6M792.0 696.2a7.9 7.9 0 1 0 15.8 0a7.9 7.9 0 1 0 -15.8 0zM836.6 696.2a34.0 34.0 0 1 0 68.0 0a34.0 34.0 0 1 0 -68.0 0zM868.2 662.6v10.6h4.8v-10.6M868.2 729.8v-10.6h4.8v10.6M837.0 693.8h10.6v4.8h-10.6M904.2 693.8h-10.6v4.8h10.6M862.7 696.2a7.9 7.9 0 1 0 15.8 0a7.9 7.9 0 1 0 -15.8 0zM907.2 696.2a34.0 34.0 0 1 0 68.0 0a34.0 34.0 0 1 0 -68.0 0zM938.8 662.6v10.6h4.8v-10.6M938.8 729.8v-10.6h4.8v10.6M907.6 693.8h10.6v4.8h-10.6M974.8 693.8h-10.6v4.8h10.6M933.3000000000001 696.2a7.9 7.9 0 1 0 15.8 0a7.9 7.9 0 1 0 -15.8 0zM695.3 766.4a34.0 34.0 0 1 0 68.0 0a34.0 34.0 0 1 0 -68.0 0zM726.9 732.8v10.6h4.8v-10.6M726.9 800.0v-10.6h4.8v10.6M695.7 764.0h10.6v4.8h-10.6M762.9 764.0h-10.6v4.8h10.6M743.5 767.2L746.9 767.9L746.1 771.8L742.7 771.1zM742.0 772.6L744.9 774.6L742.8 777.8L739.9 775.8zM738.7 777.0L740.7 779.9L737.5 782.0L735.5 779.1zM734.0 779.8L734.7 783.2L730.8 784.0L730.1 780.6zM728.5 780.6L727.8 784.0L723.9 783.2L724.6 779.8zM723.1 779.1L721.1 782.0L717.9 779.9L719.9 777.0zM718.7 775.8L715.8 777.8L713.7 774.6L716.6 772.6zM715.9 771.1L712.5 771.8L711.7 767.9L715.1 767.2zM715.1 765.6L711.7 764.9L712.5 761.0L715.9 761.7zM716.6 760.2L713.7 758.2L715.8 755.0L718.7 757.0zM719.9 755.8L717.9 752.9L721.1 750.8L723.1 753.7zM724.6 753.0L723.9 749.6L727.8 748.8L728.5 752.2zM730.1 752.2L730.8 748.8L734.7 749.6L734.0 753.0zM735.5 753.7L737.5 750.8L740.7 752.9L738.7 755.8zM739.9 757.0L742.8 755.0L744.9 758.2L742.0 760.2zM742.7 761.7L746.1 761.0L746.9 764.9L743.5 765.6zM736.6 767.3L739.9 768.7L738.4 772.3L735.1 770.9zM733.8 772.2L735.2 775.5L731.6 777.0L730.2 773.7zM728.4 773.7L727.0 777.0L723.4 775.5L724.8 772.2zM723.5 770.9L720.2 772.3L718.7 768.7L722.0 767.3zM722.0 765.5L718.7 764.1L720.2 760.5L723.5 761.9zM724.8 760.6L723.4 757.3L727.0 755.8L728.4 759.1zM730.2 759.1L731.6 755.8L735.2 757.3L733.8 760.6zM735.1 761.9L738.4 760.5L739.9 764.1L736.6 765.5zM765.9 766.4a34.0 34.0 0 1 0 68.0 0a34.0 34.0 0 1 0 -68.0 0zM797.5 732.8v10.6h4.8v-10.6M797.5 800.0v-10.6h4.8v10.6M766.3 764.0h10.6v4.8h-10.6M833.5 764.0h-10.6v4.8h10.6M814.1 767.2L817.5 767.9L816.7 771.8L813.3 771.1zM812.6 772.6L815.5 774.6L813.4 777.8L810.5 775.8zM809.3 777.0L811.3 779.9L808.1 782.0L806.1 779.1zM804.6 779.8L805.3 783.2L801.4 784.0L800.7 780.6zM799.1 780.6L798.4 784.0L794.5 783.2L795.2 779.8zM793.7 779.1L791.7 782.0L788.5 779.9L790.5 777.0zM789.3 775.8L786.4 777.8L784.3 774.6L787.2 772.6zM786.5 771.1L783.1 771.8L782.3 767.9L785.7 767.2zM785.7 765.6L782.3 764.9L783.1 761.0L786.5 761.7zM787.2 760.2L784.3 758.2L786.4 755.0L789.3 757.0zM790.5 755.8L788.5 752.9L791.7 750.8L793.7 753.7zM795.2 753.0L794.5 749.6L798.4 748.8L799.1 752.2zM800.7 752.2L801.4 748.8L805.3 749.6L804.6 753.0zM806.1 753.7L808.1 750.8L811.3 752.9L809.3 755.8zM810.5 757.0L813.4 755.0L815.5 758.2L812.6 760.2zM813.3 761.7L816.7 761.0L817.5 764.9L814.1 765.6zM807.2 767.3L810.5 768.7L809.0 772.3L805.7 770.9zM804.4 772.2L805.8 775.5L802.2 777.0L800.8 773.7zM799.0 773.7L797.6 777.0L794.0 775.5L795.4 772.2zM794.1 770.9L790.8 772.3L789.3 768.7L792.6 767.3zM792.6 765.5L789.3 764.1L790.8 760.5L794.1 761.9zM795.4 760.6L794.0 757.3L797.6 755.8L799.0 759.1zM800.8 759.1L802.2 755.8L805.8 757.3L804.4 760.6zM805.7 761.9L809.0 760.5L810.5 764.1L807.2 765.5zM836.6 766.4a34.0 34.0 0 1 0 68.0 0a34.0 34.0 0 1 0 -68.0 0zM868.2 732.8v10.6h4.8v-10.6M868.2 800.0v-10.6h4.8v10.6M837.0 764.0h10.6v4.8h-10.6M904.2 764.0h-10.6v4.8h10.6M884.8 767.2L888.2 767.9L887.4 771.8L884.0 771.1zM883.3 772.6L886.2 774.6L884.1 777.8L881.2 775.8zM880.0 777.0L882.0 779.9L878.8 782.0L876.8 779.1zM875.3 779.8L876.0 783.2L872.1 784.0L871.4 780.6zM869.8 780.6L869.1 784.0L865.2 783.2L865.9 779.8zM864.4 779.1L862.4 782.0L859.2 779.9L861.2 777.0zM860.0 775.8L857.1 777.8L855.0 774.6L857.9 772.6zM857.2 771.1L853.8 771.8L853.0 767.9L856.4 767.2zM856.4 765.6L853.0 764.9L853.8 761.0L857.2 761.7zM857.9 760.2L855.0 758.2L857.1 755.0L860.0 757.0zM861.2 755.8L859.2 752.9L862.4 750.8L864.4 753.7zM865.9 753.0L865.2 749.6L869.1 748.8L869.8 752.2zM871.4 752.2L872.1 748.8L876.0 749.6L875.3 753.0zM876.8 753.7L878.8 750.8L882.0 752.9L880.0 755.8zM881.2 757.0L884.1 755.0L886.2 758.2L883.3 760.2zM884.0 761.7L887.4 761.0L888.2 764.9L884.8 765.6zM877.9 767.3L881.2 768.7L879.7 772.3L876.4 770.9zM875.1 772.2L876.5 775.5L872.9 777.0L871.5 773.7zM869.7 773.7L868.3 777.0L864.7 775.5L866.1 772.2zM864.8 770.9L861.5 772.3L860.0 768.7L863.3 767.3zM863.3 765.5L860.0 764.1L861.5 760.5L864.8 761.9zM866.1 760.6L864.7 757.3L868.3 755.8L869.7 759.1zM871.5 759.1L872.9 755.8L876.5 757.3L875.1 760.6zM876.4 761.9L879.7 760.5L881.2 764.1L877.9 765.5zM907.2 766.4a34.0 34.0 0 1 0 68.0 0a34.0 34.0 0 1 0 -68.0 0zM938.8 732.8v10.6h4.8v-10.6M938.8 800.0v-10.6h4.8v10.6M907.6 764.0h10.6v4.8h-10.6M974.8 764.0h-10.6v4.8h10.6M955.4 767.2L958.8 767.9L958.0 771.8L954.6 771.1zM953.9 772.6L956.8 774.6L954.7 777.8L951.8 775.8zM950.6 777.0L952.6 779.9L949.4 782.0L947.4 779.1zM945.9 779.8L946.6 783.2L942.7 784.0L942.0 780.6zM940.4 780.6L939.7 784.0L935.8 783.2L936.5 779.8zM935.0 779.1L933.0 782.0L929.8 779.9L931.8 777.0zM930.6 775.8L927.7 777.8L925.6 774.6L928.5 772.6zM927.8 771.1L924.4 771.8L923.6 767.9L927.0 767.2zM927.0 765.6L923.6 764.9L924.4 761.0L927.8 761.7zM928.5 760.2L925.6 758.2L927.7 755.0L930.6 757.0zM931.8 755.8L929.8 752.9L933.0 750.8L935.0 753.7zM936.5 753.0L935.8 749.6L939.7 748.8L940.4 752.2zM942.0 752.2L942.7 748.8L946.6 749.6L945.9 753.0zM947.4 753.7L949.4 750.8L952.6 752.9L950.6 755.8zM951.8 757.0L954.7 755.0L956.8 758.2L953.9 760.2zM954.6 761.7L958.0 761.0L958.8 764.9L955.4 765.6zM948.5 767.3L951.8 768.7L950.3 772.3L947.0 770.9zM945.7 772.2L947.1 775.5L943.5 777.0L942.1 773.7zM940.3 773.7L938.9 777.0L935.3 775.5L936.7 772.2zM935.4 770.9L932.1 772.3L930.6 768.7L933.9 767.3zM933.9 765.5L930.6 764.1L932.1 760.5L935.4 761.9zM936.7 760.6L935.3 757.3L938.9 755.8L940.3 759.1zM942.1 759.1L943.5 755.8L947.1 757.3L945.7 760.6zM947.0 761.9L950.3 760.5L951.8 764.1L948.5 765.5zM695.3 836.6a34.0 34.0 0 1 0 68.0 0a34.0 34.0 0 1 0 -68.0 0zM726.9 803.0v10.6h4.8v-10.6M726.9 870.2v-10.6h4.8v10.6M695.7 834.2h10.6v4.8h-10.6M762.9 834.2h-10.6v4.8h10.6M712.5999999999999 836.6a16.7 16.7 0 1 0 33.4 0a16.7 16.7 0 1 0 -33.4 0zM717.9 836.6a11.4 11.4 0 1 0 22.8 0a11.4 11.4 0 1 0 -22.8 0zM727.3 828.6h4v16h-4zM765.9 836.6a34.0 34.0 0 1 0 68.0 0a34.0 34.0 0 1 0 -68.0 0zM797.5 803.0v10.6h4.8v-10.6M797.5 870.2v-10.6h4.8v10.6M766.3 834.2h10.6v4.8h-10.6M833.5 834.2h-10.6v4.8h10.6M783.1999999999999 836.6a16.7 16.7 0 1 0 33.4 0a16.7 16.7 0 1 0 -33.4 0zM788.5 836.6a11.4 11.4 0 1 0 22.8 0a11.4 11.4 0 1 0 -22.8 0zM797.9 828.6h4v16h-4zM836.6 836.6a34.0 34.0 0 1 0 68.0 0a34.0 34.0 0 1 0 -68.0 0zM868.2 803.0v10.6h4.8v-10.6M868.2 870.2v-10.6h4.8v10.6M837.0 834.2h10.6v4.8h-10.6M904.2 834.2h-10.6v4.8h10.6M853.9 836.6a16.7 16.7 0 1 0 33.4 0a16.7 16.7 0 1 0 -33.4 0zM859.2 836.6a11.4 11.4 0 1 0 22.8 0a11.4 11.4 0 1 0 -22.8 0zM868.6 828.6h4v16h-4zM907.2 836.6a34.0 34.0 0 1 0 68.0 0a34.0 34.0 0 1 0 -68.0 0zM938.8 803.0v10.6h4.8v-10.6M938.8 870.2v-10.6h4.8v10.6M907.6 834.2h10.6v4.8h-10.6M974.8 834.2h-10.6v4.8h10.6M924.5 836.6a16.7 16.7 0 1 0 33.4 0a16.7 16.7 0 1 0 -33.4 0zM929.8000000000001 836.6a11.4 11.4 0 1 0 22.8 0a11.4 11.4 0 1 0 -22.8 0zM939.2 828.6h4v16h-4zM752.1999999999999 729.6a13.2 13.2 0 1 0 26.4 0a13.2 13.2 0 1 0 -26.4 0zM762.4 728.1h6v3.5h-6zM831.6 738.5A9.2 9.2 0 1 1 836.0 738.5L836.0 727.6L831.6 727.6ZM904.3 740.3A9.6 9.6 0 1 1 908.7 740.3L908.7 729.0L904.3 729.0ZM763.2 810.8A9.6 9.6 0 1 1 767.6 810.8L767.6 799.5L763.2 799.5ZM833.3 811.7A9.6 9.6 0 1 1 837.7 811.7L837.7 800.4L833.3 800.4ZM902.7 811.7A9.6 9.6 0 1 1 907.1 811.7L907.1 800.4L902.7 800.4ZM773.6 500.2h32.6M773.6 585.0h32.6M765.6 473.1L769.6 471.1L771.6 471.1L771.6 481.7L774.6 481.7L774.6 468.1Q776.1 466.6 779.1 468.1L781.6 470.1L781.6 496.2Q780.1 497.7 778.1 496.7L765.6 481.2ZM781.6 473.7L785.6 471.7L787.6 471.7L787.6 482.3L790.6 482.3L790.6 468.7Q792.1 467.2 795.1 468.7L797.6 470.7L797.6 496.8Q796.1 498.3 794.1 497.3L781.6 481.8ZM592.6 449.0H619.4M591.1 738.4H620.9M605.9 449.0V738.4M591.1 485.6H620.9M591.1 522.2H620.9M591.1 558.8H620.9M591.1 595.4H620.9M591.1 632.0H620.9M591.1 668.6H620.9M591.1 705.2H620.9M592.6 449.0Q591.1 449.0 591.1 450.5L591.1 455.3L597.6 455.3L598.6 456.3L597.6 457.3L598.9 458.3L598.1 461.2L591.1 461.2L591.1 467.5L597.6 467.5L598.6 468.5L597.6 469.5L598.9 470.5L598.1 473.4L591.1 473.4L591.1 479.7L597.6 479.7L598.6 480.7L597.6 481.7L598.9 482.7L598.1 485.6L591.1 485.6L591.1 491.9L597.6 491.9L598.6 492.9L597.6 493.9L598.9 494.9L598.1 497.8L591.1 497.8L591.1 504.1L597.6 504.1L598.6 505.1L597.6 506.1L598.9 507.1L598.1 510.0L591.1 510.0L591.1 516.3L597.6 516.3L598.6 517.3L597.6 518.3L598.9 519.3L598.1 522.2L591.1 522.2L591.1 528.5L597.6 528.5L598.6 529.5L597.6 530.5L598.9 531.5L598.1 534.4L591.1 534.4L591.1 540.7L597.6 540.7L598.6 541.7L597.6 542.7L598.9 543.7L598.1 546.6L591.1 546.6L591.1 552.9L597.6 552.9L598.6 553.9L597.6 554.9L598.9 555.9L598.1 558.8L591.1 558.8L591.1 565.1L597.6 565.1L598.6 566.1L597.6 567.1L598.9 568.1L598.1 571.0L591.1 571.0L591.1 577.3L597.6 577.3L598.6 578.3L597.6 579.3L598.9 580.3L598.1 583.2L591.1 583.2L591.1 589.5L597.6 589.5L598.6 590.5L597.6 591.5L598.9 592.5L598.1 595.4L591.1 595.4L591.1 601.7L597.6 601.7L598.6 602.7L597.6 603.7L598.9 604.7L598.1 607.6L591.1 607.6L591.1 613.9L597.6 613.9L598.6 614.9L597.6 615.9L598.9 616.9L598.1 619.8L591.1 619.8L591.1 626.1L597.6 626.1L598.6 627.1L597.6 628.1L598.9 629.1L598.1 632.0L591.1 632.0L591.1 638.3L597.6 638.3L598.6 639.3L597.6 640.3L598.9 641.3L598.1 644.2L591.1 644.2L591.1 650.5L597.6 650.5L598.6 651.5L597.6 652.5L598.9 653.5L598.1 656.4L591.1 656.4L591.1 662.7L597.6 662.7L598.6 663.7L597.6 664.7L598.9 665.7L598.1 668.6L591.1 668.6L591.1 674.9L597.6 674.9L598.6 675.9L597.6 676.9L598.9 677.9L598.1 680.8L591.1 680.8L591.1 687.1L597.6 687.1L598.6 688.1L597.6 689.1L598.9 690.1L598.1 693.0L591.1 693.0L591.1 699.3L597.6 699.3L598.6 700.3L597.6 701.3L598.9 702.3L598.1 705.2L591.1 705.2L591.1 711.5L597.6 711.5L598.6 712.5L597.6 713.5L598.9 714.5L598.1 717.4L591.1 717.4L591.1 723.7L597.6 723.7L598.6 724.7L597.6 725.7L598.9 726.7L598.1 729.6L591.1 729.6L591.1 738.4M619.4 449.0Q620.9 449.0 620.9 450.5L620.9 455.3L614.4 455.3L613.4 456.3L614.4 457.3L613.1 458.3L613.9 461.2L620.9 461.2L620.9 467.5L614.4 467.5L613.4 468.5L614.4 469.5L613.1 470.5L613.9 473.4L620.9 473.4L620.9 479.7L614.4 479.7L613.4 480.7L614.4 481.7L613.1 482.7L613.9 485.6L620.9 485.6L620.9 491.9L614.4 491.9L613.4 492.9L614.4 493.9L613.1 494.9L613.9 497.8L620.9 497.8L620.9 504.1L614.4 504.1L613.4 505.1L614.4 506.1L613.1 507.1L613.9 510.0L620.9 510.0L620.9 516.3L614.4 516.3L613.4 517.3L614.4 518.3L613.1 519.3L613.9 522.2L620.9 522.2L620.9 528.5L614.4 528.5L613.4 529.5L614.4 530.5L613.1 531.5L613.9 534.4L620.9 534.4L620.9 540.7L614.4 540.7L613.4 541.7L614.4 542.7L613.1 543.7L613.9 546.6L620.9 546.6L620.9 552.9L614.4 552.9L613.4 553.9L614.4 554.9L613.1 555.9L613.9 558.8L620.9 558.8L620.9 565.1L614.4 565.1L613.4 566.1L614.4 567.1L613.1 568.1L613.9 571.0L620.9 571.0L620.9 577.3L614.4 577.3L613.4 578.3L614.4 579.3L613.1 580.3L613.9 583.2L620.9 583.2L620.9 589.5L614.4 589.5L613.4 590.5L614.4 591.5L613.1 592.5L613.9 595.4L620.9 595.4L620.9 601.7L614.4 601.7L613.4 602.7L614.4 603.7L613.1 604.7L613.9 607.6L620.9 607.6L620.9 613.9L614.4 613.9L613.4 614.9L614.4 615.9L613.1 616.9L613.9 619.8L620.9 619.8L620.9 626.1L614.4 626.1L613.4 627.1L614.4 628.1L613.1 629.1L613.9 632.0L620.9 632.0L620.9 638.3L614.4 638.3L613.4 639.3L614.4 640.3L613.1 641.3L613.9 644.2L620.9 644.2L620.9 650.5L614.4 650.5L613.4 651.5L614.4 652.5L613.1 653.5L613.9 656.4L620.9 656.4L620.9 662.7L614.4 662.7L613.4 663.7L614.4 664.7L613.1 665.7L613.9 668.6L620.9 668.6L620.9 674.9L614.4 674.9L613.4 675.9L614.4 676.9L613.1 677.9L613.9 680.8L620.9 680.8L620.9 687.1L614.4 687.1L613.4 688.1L614.4 689.1L613.1 690.1L613.9 693.0L620.9 693.0L620.9 699.3L614.4 699.3L613.4 700.3L614.4 701.3L613.1 702.3L613.9 705.2L620.9 705.2L620.9 711.5L614.4 711.5L613.4 712.5L614.4 713.5L613.1 714.5L613.9 717.4L620.9 717.4L620.9 723.7L614.4 723.7L613.4 724.7L614.4 725.7L613.1 726.7L613.9 729.6L620.9 729.6L620.9 738.4" stroke="#080808" stroke-width="1" vector-effect="non-scaling-stroke"/><path d="M776.2 502.3h2.5v2.5h-2.5zM776.2 506.6h2.5v2.5h-2.5zM776.2 510.9h2.5v2.5h-2.5zM780.4 502.3h2.5v2.5h-2.5zM780.4 506.6h2.5v2.5h-2.5zM780.4 510.9h2.5v2.5h-2.5zM784.6 502.3h2.5v2.5h-2.5zM784.6 506.6h2.5v2.5h-2.5zM784.6 510.9h2.5v2.5h-2.5zM788.8 502.3h2.5v2.5h-2.5zM788.8 506.6h2.5v2.5h-2.5zM788.8 510.9h2.5v2.5h-2.5zM793.0 502.3h2.5v2.5h-2.5zM793.0 506.6h2.5v2.5h-2.5zM793.0 510.9h2.5v2.5h-2.5zM797.2 502.3h2.5v2.5h-2.5zM797.2 506.6h2.5v2.5h-2.5zM797.2 510.9h2.5v2.5h-2.5zM801.4 502.3h2.5v2.5h-2.5zM801.4 506.6h2.5v2.5h-2.5zM801.4 510.9h2.5v2.5h-2.5zM776.2 587.1h2.5v2.5h-2.5zM776.2 591.4h2.5v2.5h-2.5zM776.2 595.7h2.5v2.5h-2.5zM780.4 587.1h2.5v2.5h-2.5zM780.4 591.4h2.5v2.5h-2.5zM780.4 595.7h2.5v2.5h-2.5zM784.6 587.1h2.5v2.5h-2.5zM784.6 591.4h2.5v2.5h-2.5zM784.6 595.7h2.5v2.5h-2.5zM788.8 587.1h2.5v2.5h-2.5zM788.8 591.4h2.5v2.5h-2.5zM788.8 595.7h2.5v2.5h-2.5zM793.0 587.1h2.5v2.5h-2.5zM793.0 591.4h2.5v2.5h-2.5zM793.0 595.7h2.5v2.5h-2.5zM797.2 587.1h2.5v2.5h-2.5zM797.2 591.4h2.5v2.5h-2.5zM797.2 595.7h2.5v2.5h-2.5zM801.4 587.1h2.5v2.5h-2.5zM801.4 591.4h2.5v2.5h-2.5zM801.4 595.7h2.5v2.5h-2.5z" stroke="#222" stroke-width=".9"/><g fill="#e00000" stroke="#e00000" stroke-width="0.4" font-family="Liberation Sans,sans-serif" font-weight="bold" font-size="5.3" text-anchor="middle"><text x="777" y="489.4">F</text><text x="793.5" y="489.9" transform="rotate(90 793.5 488)">b</text></g></g>
<g transform="translate(0 0) scale(1.00000)" fill="none" stroke-linejoin="round"><g fill="#e00000" stroke="#e00000" stroke-width="0.4" font-family="Liberation Sans,sans-serif" font-weight="bold" font-size="3.6" text-anchor="middle"><text x="729.3" y="677.0">X</text><text x="729.3" y="718.0" transform="rotate(180 729.3 716.7)">E</text><text x="708.8" y="697.5" transform="rotate(270 708.8 696.2)">Y</text><text x="749.8" y="697.5">R</text><text x="799.9" y="677.0">J</text><text x="799.9" y="718.0" transform="rotate(90 799.9 716.7)">K</text><text x="779.4" y="697.5">M</text><text x="820.4" y="697.5" transform="rotate(180 820.4 696.2)">h</text><text x="870.6" y="677.0" transform="rotate(270 870.6 675.7)">d</text><text x="870.6" y="718.0">N</text><text x="850.1" y="697.5">A</text><text x="891.1" y="697.5" transform="rotate(90 891.1 696.2)">L</text><text x="941.2" y="677.0">P</text><text x="941.2" y="718.0" transform="rotate(180 941.2 716.7)">V</text><text x="920.7" y="697.5" transform="rotate(270 920.7 696.2)">F</text><text x="961.7" y="697.5">b</text><text x="729.3" y="747.2">X</text><text x="729.3" y="788.2" transform="rotate(90 729.3 786.9)">E</text><text x="708.8" y="767.7">Y</text><text x="749.8" y="767.7" transform="rotate(180 749.8 766.4)">R</text><text x="799.9" y="747.2" transform="rotate(270 799.9 745.9)">J</text><text x="799.9" y="788.2">K</text><text x="779.4" y="767.7">M</text><text x="820.4" y="767.7" transform="rotate(90 820.4 766.4)">h</text><text x="870.6" y="747.2">d</text><text x="870.6" y="788.2" transform="rotate(180 870.6 786.9)">N</text><text x="850.1" y="767.7" transform="rotate(270 850.1 766.4)">A</text><text x="891.1" y="767.7">L</text><text x="941.2" y="747.2">P</text><text x="941.2" y="788.2" transform="rotate(90 941.2 786.9)">V</text><text x="920.7" y="767.7">F</text><text x="961.7" y="767.7" transform="rotate(180 961.7 766.4)">b</text><text x="729.3" y="817.4" transform="rotate(270 729.3 816.1)">X</text><text x="729.3" y="858.4">E</text><text x="708.8" y="837.9">Y</text><text x="749.8" y="837.9" transform="rotate(90 749.8 836.6)">R</text><text x="799.9" y="817.4">J</text><text x="799.9" y="858.4" transform="rotate(180 799.9 857.1)">K</text><text x="779.4" y="837.9" transform="rotate(270 779.4 836.6)">M</text><text x="820.4" y="837.9">h</text><text x="870.6" y="817.4">d</text><text x="870.6" y="858.4" transform="rotate(90 870.6 857.1)">N</text><text x="850.1" y="837.9">A</text><text x="891.1" y="837.9" transform="rotate(180 891.1 836.6)">L</text><text x="941.2" y="817.4" transform="rotate(270 941.2 816.1)">P</text><text x="941.2" y="858.4">V</text><text x="920.7" y="837.9">F</text><text x="961.7" y="837.9" transform="rotate(90 961.7 836.6)">b</text><text x="768" y="737.3">X</text><text x="834" y="723.3" transform="rotate(180 834 722)">E</text><text x="906" y="724.3" transform="rotate(270 906 723)">Y</text><text x="765" y="795.3">R</text><text x="836" y="796.3">J</text><text x="905" y="796.3" transform="rotate(90 905 795)">K</text><text x="602.7" y="459.2">M</text><text x="609.1" y="459.2" transform="rotate(180 609.1 457.9)">h</text><text x="602.7" y="471.4" transform="rotate(270 602.7 470.1)">d</text><text x="609.1" y="471.4">N</text><text x="602.7" y="483.6">A</text><text x="609.1" y="483.6" transform="rotate(90 609.1 482.3)">L</text><text x="602.7" y="495.8">P</text><text x="609.1" y="495.8" transform="rotate(180 609.1 494.5)">V</text><text x="602.7" y="508.0" transform="rotate(270 602.7 506.7)">F</text><text x="609.1" y="508.0">b</text><text x="602.7" y="520.2">X</text><text x="609.1" y="520.2" transform="rotate(90 609.1 518.9)">E</text><text x="602.7" y="532.4">Y</text><text x="609.1" y="532.4" transform="rotate(180 609.1 531.1)">R</text><text x="602.7" y="544.6" transform="rotate(270 602.7 543.3)">J</text><text x="609.1" y="544.6">K</text><text x="602.7" y="556.8">M</text><text x="609.1" y="556.8" transform="rotate(90 609.1 555.5)">h</text><text x="602.7" y="569.0">d</text><text x="609.1" y="569.0" transform="rotate(180 609.1 567.7)">N</text><text x="602.7" y="581.2" transform="rotate(270 602.7 579.9)">A</text><text x="609.1" y="581.2">L</text><text x="602.7" y="593.4">P</text><text x="609.1" y="593.4" transform="rotate(90 609.1 592.1)">V</text><text x="602.7" y="605.6">F</text><text x="609.1" y="605.6" transform="rotate(180 609.1 604.3)">b</text><text x="602.7" y="617.8" transform="rotate(270 602.7 616.5)">X</text><text x="609.1" y="617.8">E</text><text x="602.7" y="630.0">Y</text><text x="609.1" y="630.0" transform="rotate(90 609.1 628.7)">R</text><text x="602.7" y="642.2">J</text><text x="609.1" y="642.2" transform="rotate(180 609.1 640.9)">K</text><text x="602.7" y="654.4" transform="rotate(270 602.7 653.1)">M</text><text x="609.1" y="654.4">h</text><text x="602.7" y="666.6">d</text><text x="609.1" y="666.6" transform="rotate(90 609.1 665.3)">N</text><text x="602.7" y="678.8">A</text><text x="609.1" y="678.8" transform="rotate(180 609.1 677.5)">L</text><text x="602.7" y="691.0" transform="rotate(270 602.7 689.7)">P</text><text x="609.1" y="691.0">V</text><text x="602.7" y="703.2">F</text><text x="609.1" y="703.2" transform="rotate(90 609.1 701.9)">b</text><text x="602.7" y="715.4">X</text><text x="609.1" y="715.4" transform="rotate(180 609.1 714.1)">E</text><text x="602.7" y="727.6" transform="rotate(270 602.7 726.3)">Y</text><text x="609.1" y="727.6">R</text></g></g>
</svg>
<div class="a" style="left:1623px;top:89px;width:1px;height:875px;background:#fff"></div>
<div class="a" style="left:1624px;top:88px;width:296px;height:1px;background:#a0a0a0"></div><div class="a" style="left:1624px;top:89px;width:296px;height:1px;background:#fff"></div>
<div class="a" style="left:1628px;top:95px;width:274px;height:1px;background:#fff"></div><div class="a" style="left:1628px;top:96px;width:274px;height:1px;background:#a0a0a0"></div>
<div class="a" style="left:1628px;top:98px;width:274px;height:1px;background:#fff"></div><div class="a" style="left:1628px;top:99px;width:274px;height:1px;background:#a0a0a0"></div>
<div class="a" style="left:1901px;top:95px;width:1px;height:5px;background:#a0a0a0"></div>
<svg style="left:1907px;top:93px" width="9" height="9" viewBox="0 0 9 9"><path d="M1.500 1.500l5.500 5.500M7 1.500l-5.500 5.500" stroke="#000" stroke-width="1.700"/></svg>
<div class="a" style="left:1634px;top:125px;width:272px;height:1px;background:#fff"></div>
<div class="a" style="left:1631px;top:106px;width:44px;height:20px;box-sizing:border-box;border-left:1px solid #fff;border-top:1px solid #fff;border-right:1px solid #696969;background:#f0f0f0;box-shadow:inset -1px 0 0 #a0a0a0"></div>
<div class="t" style="left:1636px;top:108px;">Work</div>
<div class="a" style="left:1676px;top:108px;width:42px;height:17px;box-sizing:border-box;border-left:1px solid #fff;border-top:1px solid #fff;border-right:1px solid #696969;box-shadow:inset -1px 0 0 #a0a0a0"></div>
<div class="t" style="left:1680px;top:110px;">Output</div>
<div class="a" style="left:1718px;top:108px;width:42px;height:17px;box-sizing:border-box;border-left:1px solid #fff;border-top:1px solid #fff;border-right:1px solid #696969;box-shadow:inset -1px 0 0 #a0a0a0"></div>
<div class="t" style="left:1724px;top:110px;">Doc</div>
<div class="a" style="left:1760px;top:108px;width:42px;height:17px;box-sizing:border-box;border-left:1px solid #fff;border-top:1px solid #fff;border-right:1px solid #696969;box-shadow:inset -1px 0 0 #a0a0a0"></div>
<div class="t" style="left:1766px;top:110px;">User</div>
<div class="a" style="left:1802px;top:108px;width:42px;height:17px;box-sizing:border-box;border-left:1px solid #fff;border-top:1px solid #fff;border-right:1px solid #696969;box-shadow:inset -1px 0 0 #a0a0a0"></div>
<div class="t" style="left:1808px;top:110px;">Test</div>
<div class="a" style="left:1844px;top:108px;width:62px;height:17px;box-sizing:border-box;border-left:1px solid #fff;border-top:1px solid #fff;border-right:1px solid #696969;box-shadow:inset -1px 0 0 #a0a0a0"></div>
<div class="t" style="left:1850px;top:110px;">Transform</div>
<div class="a" style="left:1634px;top:129px;width:272px;height:162px;box-sizing:border-box;border:1px solid;border-color:#a0a0a0 #fff #fff #a0a0a0;background:#fff;box-shadow:inset 1px 1px 0 #696969"></div>
<div class="btn" style="left:1636px;top:131px;width:49px;height:17px;line-height:14px;text-align:left;padding-left:4px;">Layer</div>
<div class="btn" style="left:1685px;top:131px;width:124px;height:17px;line-height:14px;">Mode</div>
<div class="btn" style="left:1809px;top:131px;width:50px;height:17px;line-height:14px;">Output</div>
<div class="btn" style="left:1859px;top:131px;width:45px;height:17px;line-height:14px;">Hide</div>
<div class="a" style="left:1636px;top:176px;width:268px;height:1px;background:#ececec"></div>
<div class="a" style="left:1636px;top:190px;width:268px;height:1px;background:#ececec"></div>
<div class="a" style="left:1636px;top:204px;width:268px;height:1px;background:#ececec"></div>
<div class="a" style="left:1636px;top:218px;width:268px;height:1px;background:#ececec"></div>
<div class="a" style="left:1636px;top:232px;width:268px;height:1px;background:#ececec"></div>
<div class="a" style="left:1636px;top:246px;width:268px;height:1px;background:#ececec"></div>
<div class="a" style="left:1636px;top:259px;width:268px;height:1px;background:#ececec"></div>
<div class="a" style="left:1685px;top:148px;width:1px;height:123px;background:#ececec"></div>
<div class="a" style="left:1809px;top:148px;width:1px;height:123px;background:#ececec"></div>
<div class="a" style="left:1859px;top:148px;width:1px;height:123px;background:#ececec"></div>
<div class="a" style="left:1636px;top:149px;width:49px;height:13px;background:#f00"></div>
<div class="a" style="left:1686px;top:149px;width:218px;height:13px;background:#0000c8"></div>
<div class="a" style="left:1809px;top:149px;width:1px;height:13px;background:#fff"></div><div class="a" style="left:1859px;top:149px;width:1px;height:13px;background:#fff"></div>
<div class="a" style="left:1636px;top:163px;width:49px;height:13px;background:#323232"></div>
<div class="t" style="left:1686px;top:148px;width:123px;text-align:center;color:#fff;font-size:12.500px;line-height:15px">Scan</div>
<div class="t" style="left:1810px;top:148px;width:49px;text-align:center;color:#fff;font-size:12.500px;line-height:15px">Yes</div>
<div class="t" style="left:1860px;top:148px;width:44px;text-align:center;color:#fff;font-size:12.500px;line-height:15px">No</div>
<div class="t" style="left:1686px;top:162px;width:123px;text-align:center;color:#000;font-size:12.500px;line-height:15px">Cut</div>
<div class="t" style="left:1810px;top:162px;width:49px;text-align:center;color:#000;font-size:12.500px;line-height:15px">Yes</div>
<div class="t" style="left:1860px;top:162px;width:44px;text-align:center;color:#000;font-size:12.500px;line-height:15px">No</div>
<div class="a" style="left:1636px;top:272px;width:268px;height:17px;background:#f0f0f0"></div><div class="a" style="left:1652px;top:273px;width:230px;height:15px;background:#cdcdcd"></div>
<svg style="left:1636px;top:272px" width="268" height="17" viewBox="1636 272 268 17" fill="none" stroke="#404040" stroke-width="1.500"><path d="M1646 277l-3.500 3.500 3.500 3.500M1893 277l3.500 3.500-3.500 3.500"/></svg>
<div class="a" style="left:1634px;top:292px;width:272px;height:102px;box-sizing:border-box;border:1px solid;border-color:#a0a0a0 #fff #fff #a0a0a0;background:#fff;box-shadow:inset 1px 1px 0 #696969"></div>
<div class="a" style="left:1636px;top:294px;width:132px;height:99px;background:#d9d9d9"></div>
<div class="t" style="left:1637px;top:296px;">Color</div>
<div class="t" style="left:1637px;top:316px;">MinPower(%)-1</div>
<div class="t" style="left:1773px;top:317px;">10.0</div>
<div class="a" style="left:1636px;top:313px;width:268px;height:1px;background:#e6e6e6"></div>
<div class="t" style="left:1637px;top:336px;">MaxPower(%)-1</div>
<div class="t" style="left:1773px;top:337px;">10.0</div>
<div class="a" style="left:1636px;top:333px;width:268px;height:1px;background:#e6e6e6"></div>
<div class="t" style="left:1637px;top:356px;">Speed(mm/s)</div>
<div class="t" style="left:1773px;top:357px;">100.00</div>
<div class="a" style="left:1636px;top:353px;width:268px;height:1px;background:#e6e6e6"></div>
<div class="t" style="left:1637px;top:376px;">Priority</div>
<div class="t" style="left:1773px;top:377px;">1</div>
<div class="a" style="left:1636px;top:373px;width:268px;height:1px;background:#e6e6e6"></div>
<div class="a" style="left:1771px;top:296px;width:131px;height:15px;background:#f00;box-sizing:border-box;border:1px solid #800000"></div>
<div class="btn" style="left:1635px;top:397px;width:39px;height:21px;line-height:18px;letter-spacing:-.2px">Laser1</div><div class="btn" style="left:1675px;top:397px;width:44px;height:21px;line-height:18px;letter-spacing:-.2px">Laser2</div>
<div class="grp" style="left:1633px;top:430px;width:275px;height:101px"><b>Line/column setup</b></div>
<div class="t" style="left:1661px;top:438px;">Num</div>
<div class="t" style="left:1697px;top:438px;">space1</div>
<div class="t" style="left:1747px;top:438px;">space2</div>
<div class="t" style="left:1790px;top:438px;width:49px;overflow:hidden;text-indent:-3px;letter-spacing:-.2px">Dislocation</div>
<div class="t" style="left:1856px;top:438px;">Mirror</div>
<div class="t" style="left:1642px;top:459px;">X:</div>
<div class="t" style="left:1642px;top:480px;">Y:</div>
<div class="fld" style="left:1656px;top:455px;width:33px;height:19px;line-height:16px;font-size:11.500px;padding-left:3px;color:#8c8c8c">1</div>
<div class="fld" style="left:1691px;top:455px;width:47px;height:19px;line-height:16px;font-size:11.500px;padding-left:3px;color:#8c8c8c">0.000</div>
<div class="fld" style="left:1741px;top:455px;width:47px;height:19px;line-height:16px;font-size:11.500px;padding-left:3px;color:#8c8c8c">0.000</div>
<div class="fld" style="left:1790px;top:455px;width:47px;height:19px;line-height:16px;font-size:11.500px;padding-left:3px;color:#8c8c8c">0.000</div>
<div class="fld" style="left:1656px;top:476px;width:33px;height:19px;line-height:16px;font-size:11.500px;padding-left:3px;color:#8c8c8c">1</div>
<div class="fld" style="left:1691px;top:476px;width:47px;height:19px;line-height:16px;font-size:11.500px;padding-left:3px;color:#8c8c8c">0.000</div>
<div class="fld" style="left:1741px;top:476px;width:47px;height:19px;line-height:16px;font-size:11.500px;padding-left:3px;color:#8c8c8c">0.000</div>
<div class="fld" style="left:1790px;top:476px;width:47px;height:19px;line-height:16px;font-size:11.500px;padding-left:3px;color:#8c8c8c">0.000</div>
<div class="a" style="left:1840px;top:454px;width:63px;height:42px;box-sizing:border-box;border:1px solid #a0a0a0;box-shadow:1px 1px 0 #fff,inset 1px 1px 0 #fff"></div>
<div class="cb" style="left:1844px;top:459px;width:12px;height:12px;background:#f0f0f0"></div><div class="cb" style="left:1873px;top:459px;width:12px;height:12px;background:#f0f0f0"></div>
<div class="t" style="left:1861px;top:459px;color:#a8a8a8;font-size:11px">H</div>
<div class="t" style="left:1890px;top:459px;color:#a8a8a8;font-size:11px">V</div>
<div class="cb" style="left:1844px;top:478px;width:12px;height:12px;background:#f0f0f0"></div><div class="cb" style="left:1873px;top:478px;width:12px;height:12px;background:#f0f0f0"></div>
<div class="t" style="left:1861px;top:478px;color:#a8a8a8;font-size:11px">H</div>
<div class="t" style="left:1890px;top:478px;color:#a8a8a8;font-size:11px">V</div>
<div class="btn" style="left:1636px;top:496px;width:30px;height:30px;border-color:#000;box-shadow:inset 1px 1px 0 #fff,inset -1px -1px 0 #696969,inset -2px -2px 0 #a0a0a0"></div>
<svg style="left:1636px;top:496px" width="30" height="30" viewBox="1636 496 30 30"><rect x="1639.500" y="499.500" width="23" height="23" fill="#fff" stroke="#000" stroke-width="1"/><path d="M1643.500 504v15M1643.500 504.500h15" stroke="#000" stroke-width="1"/><path d="M1643.500 520l-1.500-2.500M1643.500 520l1.500-2.500M1659.500 504.500l-2.500-1.500M1659.500 504.500l-2.500 1.500" stroke="#000" stroke-width=".9"/><rect x="1642.500" y="503" width="2.500" height="2.500" fill="#0000c0"/><g fill="#10e8e8" stroke="#103030" stroke-width="1"><rect x="1648.500" y="508.500" width="3.500" height="3.500"/><rect x="1655" y="508.500" width="3.500" height="3.500"/><rect x="1648.500" y="514.500" width="3.500" height="3.500"/><rect x="1655" y="514.500" width="3.500" height="3.500"/></g></svg>
<div class="btn" style="left:1667px;top:499px;width:80px;height:25px;line-height:22px;color:#a0a0a0;text-shadow:1px 1px 0 #fff">Virtual array</div>
<div class="btn" style="left:1750px;top:499px;width:76px;height:25px;line-height:22px;color:#a0a0a0;text-shadow:1px 1px 0 #fff">Bestrew...</div>
<div class="btn" style="left:1830px;top:499px;width:70px;height:25px;line-height:22px;color:#a0a0a0;text-shadow:1px 1px 0 #fff">Nesting</div>
<div class="hsep" style="left:1629px;top:540px;width:288px"></div>
<div class="hsep" style="left:1624px;top:721px;width:296px"></div>
<div class="a" style="left:1628px;top:729px;width:274px;height:1px;background:#fff"></div><div class="a" style="left:1628px;top:730px;width:274px;height:1px;background:#a0a0a0"></div>
<div class="a" style="left:1628px;top:732px;width:274px;height:1px;background:#fff"></div><div class="a" style="left:1628px;top:733px;width:274px;height:1px;background:#a0a0a0"></div>
<div class="a" style="left:1901px;top:729px;width:1px;height:5px;background:#a0a0a0"></div>
<svg style="left:1907px;top:727px" width="9" height="9" viewBox="0 0 9 9"><path d="M1.500 1.500l5.500 5.500M7 1.500l-5.500 5.500" stroke="#000" stroke-width="1.700"/></svg>
<div class="grp" style="left:1630px;top:746px;width:286px;height:145px"><b>Laser work</b></div>
<div class="btn" style="left:1732px;top:755px;width:100px;height:23px;line-height:20px">Pause/Continue</div>
<div class="btn" style="left:1835px;top:755px;width:71px;height:23px;line-height:20px">Stop</div>
<div class="btn" style="left:1639px;top:780px;width:91px;height:23px;line-height:20px">SaveToUFile</div>
<div class="btn" style="left:1732px;top:780px;width:100px;height:23px;line-height:20px">UFileOutput</div>
<div class="btn" style="left:1835px;top:780px;width:71px;height:23px;line-height:20px">Download</div>
<div class="t" style="left:1689px;top:815px;">Position:</div>
<div class="combo" style="left:1735px;top:808px;width:171px;height:20px">Current position<i></i></div>
<div class="cb" style="left:1639px;top:839px"></div><svg style="left:1639px;top:839px" width="13" height="13"><path d="M3 6l2.500 2.500 4.500-5" stroke="#000" stroke-width="1.800" fill="none"/></svg>
<div class="t" style="left:1656px;top:838px;">Path optimize</div>
<div class="cb" style="left:1639px;top:854px"></div>
<div class="t" style="left:1656px;top:853px;">Output select graphics</div>
<div class="cb" style="left:1656px;top:872px;background:#f0f0f0"></div>
<div class="t" style="left:1673px;top:872px;color:#a0a0a0;text-shadow:1px 1px 0 #fff">Selected graphics position</div>
<div class="grp" style="left:1630px;top:902px;width:286px;height:41px"><b>Device</b></div>
<div class="btn" style="left:1638px;top:913px;width:92px;height:23px;line-height:20px">Port setting</div>
<div class="combo" style="left:1735px;top:915px;width:171px;height:21px;line-height:18px">Device---(IP:192.168.1.98)<i></i></div>
<div class="hsep" style="left:1624px;top:963px;width:296px"></div>
<svg style="left:3px;top:970px" width="9" height="9" viewBox="0 0 9 9"><path d="M1.500 1.500l5 5M6.500 1.500l-5 5" stroke="#000" stroke-width="1.600"/></svg>
<div class="a" style="left:5px;top:984px;width:1px;height:6px;background:#a0a0a0"></div><div class="a" style="left:8px;top:984px;width:1px;height:6px;background:#a0a0a0"></div>
<div class="a" style="left:20.5px;top:968px;width:23px;height:25px;box-sizing:border-box;background:#000000;border:1px solid #a8a8a8"></div>
<div class="a" style="left:46.0px;top:968px;width:23px;height:25px;box-sizing:border-box;background:#0000ff;border:1px solid #a8a8a8"></div>
<div class="a" style="left:70.9px;top:968px;width:23px;height:25px;box-sizing:border-box;background:#ff0000;border-left:2px solid #000;border-top:3px solid #000;border-right:1px solid #fff;border-bottom:1px solid #fff"></div>
<div class="a" style="left:96.9px;top:968px;width:23px;height:25px;box-sizing:border-box;background:#00ff00;border:1px solid #a8a8a8"></div>
<div class="a" style="left:122.4px;top:968px;width:23px;height:25px;box-sizing:border-box;background:#fa8072;border:1px solid #a8a8a8"></div>
<div class="a" style="left:147.8px;top:968px;width:23px;height:25px;box-sizing:border-box;background:#ffff00;border:1px solid #a8a8a8"></div>
<div class="a" style="left:173.3px;top:968px;width:23px;height:25px;box-sizing:border-box;background:#1e90ff;border:1px solid #a8a8a8"></div>
<div class="a" style="left:198.8px;top:968px;width:23px;height:25px;box-sizing:border-box;background:#8b3a13;border:1px solid #a8a8a8"></div>
<div class="a" style="left:224.3px;top:968px;width:23px;height:25px;box-sizing:border-box;background:#808000;border:1px solid #a8a8a8"></div>
<div class="a" style="left:249.7px;top:968px;width:23px;height:25px;box-sizing:border-box;background:#008060;border:1px solid #a8a8a8"></div>
<div class="a" style="left:275.2px;top:968px;width:23px;height:25px;box-sizing:border-box;background:#ff4500;border:1px solid #a8a8a8"></div>
<div class="a" style="left:300.7px;top:968px;width:23px;height:25px;box-sizing:border-box;background:#400080;border:1px solid #a8a8a8"></div>
<div class="a" style="left:326.1px;top:968px;width:23px;height:25px;box-sizing:border-box;background:#ffd0dc;border:1px solid #a8a8a8"></div>
<div class="a" style="left:351.6px;top:968px;width:23px;height:25px;box-sizing:border-box;background:#b09cf8;border:1px solid #a8a8a8"></div>
<div class="a" style="left:377.1px;top:968px;width:23px;height:25px;box-sizing:border-box;background:#d2fa9e;border:1px solid #a8a8a8"></div>
<div class="a" style="left:402.5px;top:968px;width:23px;height:25px;box-sizing:border-box;background:#f89058;border:1px solid #a8a8a8"></div>
<div class="a" style="left:428.0px;top:968px;width:23px;height:25px;box-sizing:border-box;background:#d8709c;border:1px solid #a8a8a8"></div>
<div class="a" style="left:453.5px;top:968px;width:23px;height:25px;box-sizing:border-box;background:#8870d8;border:1px solid #a8a8a8"></div>
<div class="a" style="left:479.0px;top:968px;width:23px;height:25px;box-sizing:border-box;background:#78d878;border:1px solid #a8a8a8"></div>
<div class="a" style="left:504.4px;top:968px;width:23px;height:25px;box-sizing:border-box;background:#b0a070;border:1px solid #a8a8a8"></div>
<div class="a" style="left:0;top:995px;width:1920px;height:1px;background:#d0d0d0"></div>

</body>
</html>
